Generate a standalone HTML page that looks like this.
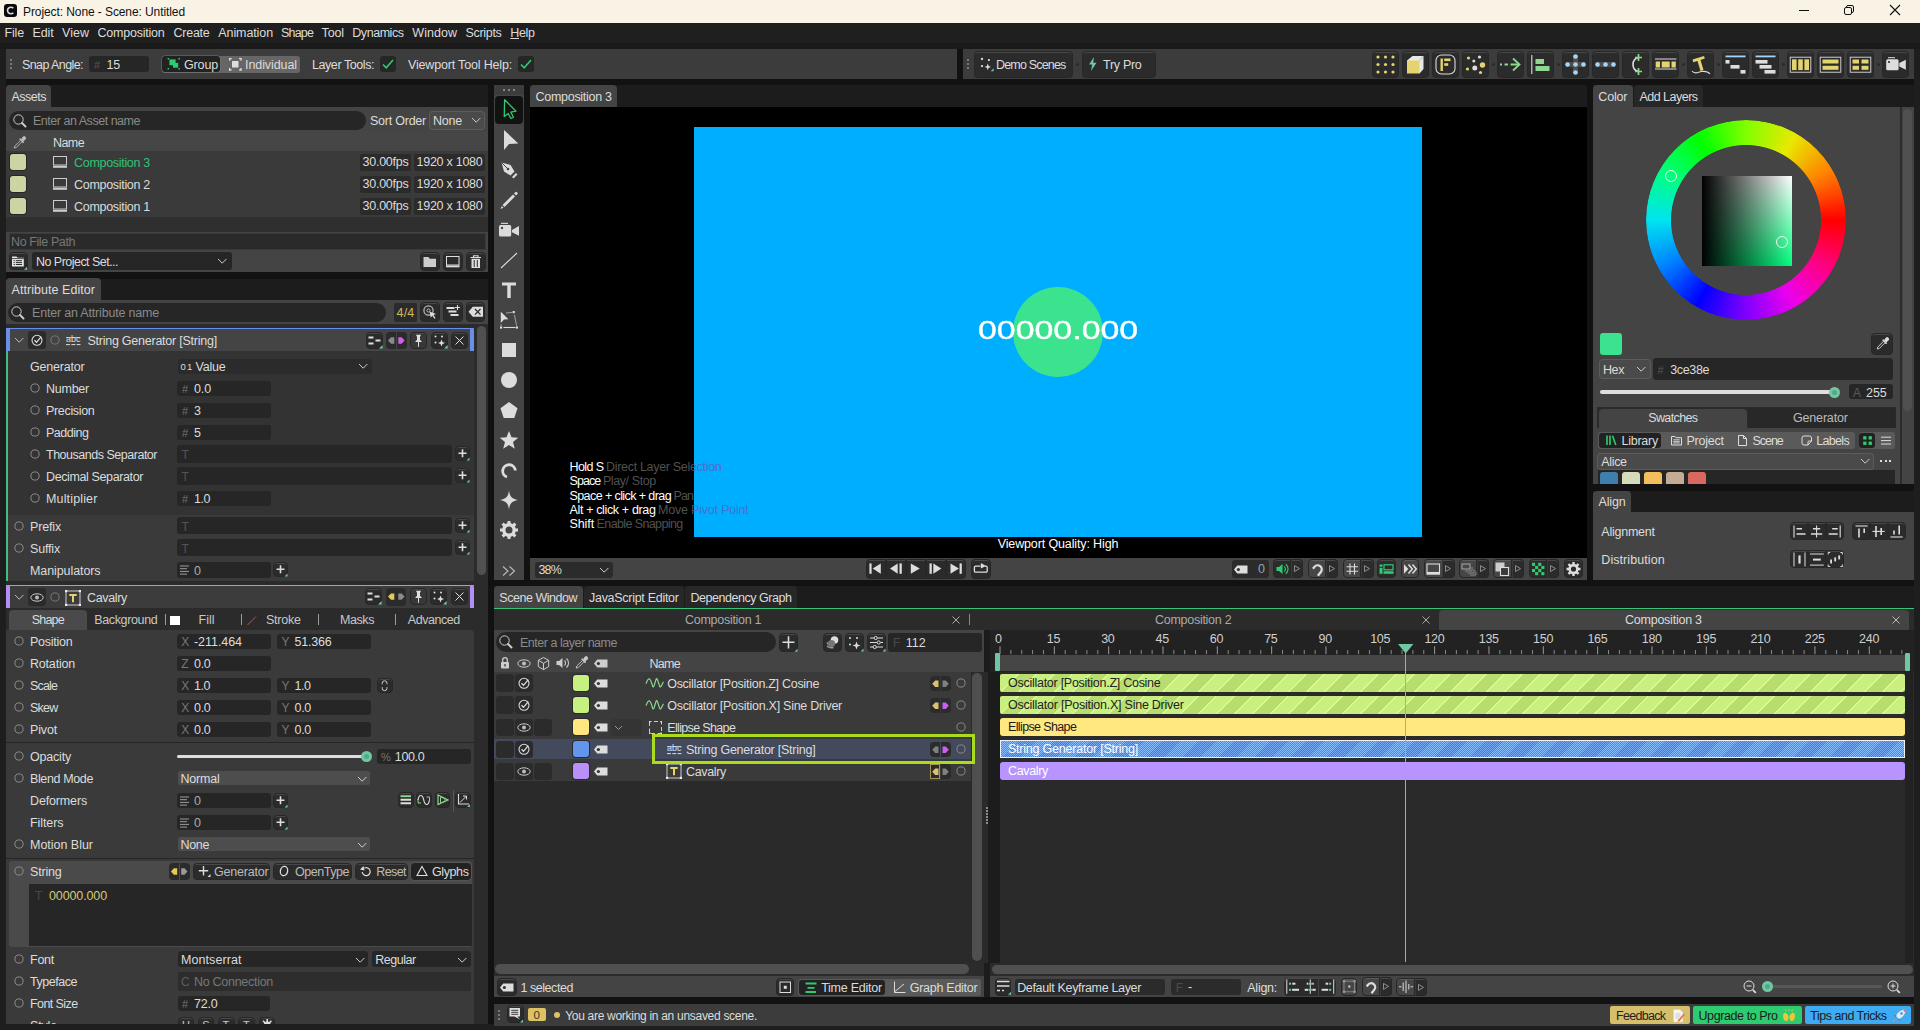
<!DOCTYPE html>
<html><head><meta charset="utf-8"><title>Project: None - Scene: Untitled</title>
<style>
html,body{margin:0;padding:0;}
body{width:1920px;height:1030px;overflow:hidden;background:#1e1e1e;position:relative;font-family:"Liberation Sans",sans-serif;font-size:12px;color:#dcdcdc;}
div,span.t,svg{position:absolute;box-sizing:border-box;}
span.t{white-space:nowrap;display:block;}
svg{overflow:visible;}
.btn{background:#2b2b2b;border-radius:4px;border:1px solid #272727;box-shadow:inset 0 1px 0 #484848;}
.inp{background:#262626;border-radius:3px;}
.tab{background:#444;border-radius:4px 4px 0 0;}
</style></head><body>
<div style="left:6px;top:79px;width:1908px;height:946.7px;background:#121212;"></div>
<div style="left:957px;top:49px;width:6px;height:30px;background:#121212;"></div>
<div style="left:6px;top:85px;width:482px;height:22px;background:#1c1c1c;"></div>
<div style="left:530px;top:85px;width:1057.3px;height:22px;background:#1c1c1c;"></div>
<div style="left:1593px;top:85px;width:321px;height:22px;background:#1c1c1c;"></div>
<div style="left:6px;top:278.5px;width:482px;height:21.5px;background:#1c1c1c;"></div>
<div style="left:1593px;top:490.5px;width:321px;height:21.5px;background:#1c1c1c;"></div>
<div style="left:494px;top:586.2px;width:1420px;height:21.8px;background:#1c1c1c;"></div>
<div style="left:0px;top:0px;width:1920px;height:23px;background:#f9f3e6;"></div>
<svg style="left:4px;top:4px;" width="13" height="13" viewBox="0 0 13 13"><rect x="0" y="0" width="13" height="13" rx="3" fill="#0a0a0a"/><path d="M9.3 4.3 A3.3 3.3 0 1 0 9.3 8.7" fill="none" stroke="#ddd" stroke-width="1.6"/></svg>
<span class="t" style="left:23px;top:3.5px;height:16px;line-height:16px;font-size:12px;color:#111;letter-spacing:-0.088px;">Project: None - Scene: Untitled</span>
<svg style="left:1798px;top:4px;" width="14" height="14" viewBox="0 0 14 14"><path d="M1 6.5 H11" stroke="#111" stroke-width="1"/></svg>
<svg style="left:1843px;top:4px;" width="14" height="14" viewBox="0 0 14 14"><rect x="1.5" y="3.5" width="7" height="7" rx="1.5" fill="none" stroke="#111"/><path d="M3.5 3.5 V3 a1.5 1.5 0 0 1 1.5 -1.5 H9 a1.5 1.5 0 0 1 1.5 1.5 V7 a1.5 1.5 0 0 1 -1.5 1.5" fill="none" stroke="#111"/></svg>
<svg style="left:1889px;top:4px;" width="14" height="14" viewBox="0 0 14 14"><path d="M1 1 L11 11 M11 1 L1 11" stroke="#111" stroke-width="1.1"/></svg>
<div style="left:0px;top:23px;width:1920px;height:20px;background:#1f1f1f;"></div>
<div style="left:0px;top:42.6px;width:1920px;height:6.4px;background:#1a1a1a;"></div>
<span class="t" style="left:4.5px;top:25.0px;height:16px;line-height:16px;font-size:12.5px;color:#dcdcdc;letter-spacing:-0.160px;">File</span>
<span class="t" style="left:32.5px;top:25.0px;height:16px;line-height:16px;font-size:12.5px;color:#dcdcdc;letter-spacing:-0.135px;">Edit</span>
<span class="t" style="left:62px;top:25.0px;height:16px;line-height:16px;font-size:12.5px;color:#dcdcdc;letter-spacing:0.033px;">View</span>
<span class="t" style="left:97.5px;top:25.0px;height:16px;line-height:16px;font-size:12.5px;color:#dcdcdc;letter-spacing:-0.225px;">Composition</span>
<span class="t" style="left:173.5px;top:25.0px;height:16px;line-height:16px;font-size:12.5px;color:#dcdcdc;letter-spacing:-0.253px;">Create</span>
<span class="t" style="left:218.3px;top:25.0px;height:16px;line-height:16px;font-size:12.5px;color:#dcdcdc;letter-spacing:-0.098px;">Animation</span>
<span class="t" style="left:281px;top:25.0px;height:16px;line-height:16px;font-size:12.5px;color:#dcdcdc;letter-spacing:-0.829px;">Shape</span>
<span class="t" style="left:321.5px;top:25.0px;height:16px;line-height:16px;font-size:12.5px;color:#dcdcdc;letter-spacing:-0.107px;">Tool</span>
<span class="t" style="left:352.3px;top:25.0px;height:16px;line-height:16px;font-size:12.5px;color:#dcdcdc;letter-spacing:-0.459px;">Dynamics</span>
<span class="t" style="left:412.3px;top:25.0px;height:16px;line-height:16px;font-size:12.5px;color:#dcdcdc;letter-spacing:0.040px;">Window</span>
<span class="t" style="left:465.5px;top:25.0px;height:16px;line-height:16px;font-size:12.5px;color:#dcdcdc;letter-spacing:-0.314px;">Scripts</span>
<span class="t" style="left:510.3px;top:25.0px;height:16px;line-height:16px;font-size:12.5px;color:#dcdcdc;letter-spacing:-0.35px;"><u>H</u>elp</span>
<div style="left:6px;top:49px;width:951px;height:30px;background:#3c3c3c;"></div>
<div style="left:10px;top:58.9px;width:2px;height:2px;background:#7a7a7a;"></div>
<div style="left:10px;top:62.9px;width:2px;height:2px;background:#7a7a7a;"></div>
<div style="left:10px;top:66.9px;width:2px;height:2px;background:#7a7a7a;"></div>
<span class="t" style="left:22px;top:56.5px;height:16px;line-height:16px;font-size:12.5px;color:#dcdcdc;letter-spacing:-0.583px;">Snap Angle:</span>
<div class="inp" style="left:89px;top:56px;width:60px;height:16px;"></div>
<span class="t" style="left:94px;top:56.5px;height:16px;line-height:16px;font-size:11px;color:#555;">#</span>
<span class="t" style="left:106.5px;top:56.5px;height:16px;line-height:16px;font-size:12.5px;color:#dcdcdc;letter-spacing:-0.201px;">15</span>
<div style="left:161.5px;top:55.5px;width:138px;height:17px;background:#666;border-radius:3px;"></div>
<div style="left:162px;top:56px;width:58px;height:16px;background:#222;border-radius:3px;box-shadow:0 0 0 0.5px #777;"></div>
<svg style="left:167px;top:58px;" width="14" height="13" viewBox="0 0 14 13"><g fill="#2ecc71"><rect x="2.4" y="1.4" width="6.2" height="5.8"/><rect x="6" y="4.9" width="5.2" height="4.8"/><rect x="0.6" y="0" width="1.5" height="1.5"/><rect x="11.4" y="0" width="1.5" height="1.5"/><rect x="0.6" y="10" width="1.5" height="1.5"/><rect x="11.4" y="10" width="1.5" height="1.5"/></g></svg>
<span class="t" style="left:184px;top:56.5px;height:16px;line-height:16px;font-size:12.5px;color:#dcdcdc;letter-spacing:-0.148px;">Group</span>
<svg style="left:228.5px;top:58px;" width="13" height="13" viewBox="0 0 13 13"><rect x="3" y="3" width="6.5" height="6.5" fill="#ddd"/><g fill="#ddd"><rect x="0" y="0" width="2.6" height="1.3"/><rect x="0" y="0" width="1.3" height="2.6"/><rect x="10" y="0" width="2.6" height="1.3"/><rect x="11.3" y="0" width="1.3" height="2.6"/><rect x="0" y="11.3" width="2.6" height="1.3"/><rect x="0" y="10" width="1.3" height="2.6"/><rect x="10" y="11.3" width="2.6" height="1.3"/><rect x="11.3" y="10" width="1.3" height="2.6"/></g></svg>
<span class="t" style="left:245px;top:56.5px;height:16px;line-height:16px;font-size:12.5px;color:#dcdcdc;letter-spacing:-0.081px;">Individual</span>
<span class="t" style="left:312px;top:56.5px;height:16px;line-height:16px;font-size:12.5px;color:#dcdcdc;letter-spacing:-0.430px;">Layer Tools:</span>
<div style="left:380px;top:56px;width:16px;height:16px;background:#262626;border-radius:3px;"></div>
<svg style="left:380px;top:56px;" width="16" height="16" viewBox="0 0 16 16"><path d="M3 8.5 L6.2 11.8 L13 4" fill="none" stroke="#2ecc71" stroke-width="1.6"/></svg>
<span class="t" style="left:408px;top:56.5px;height:16px;line-height:16px;font-size:12.5px;color:#dcdcdc;letter-spacing:-0.170px;">Viewport Tool Help:</span>
<div style="left:518px;top:56px;width:16px;height:16px;background:#262626;border-radius:3px;"></div>
<svg style="left:518px;top:56px;" width="16" height="16" viewBox="0 0 16 16"><path d="M3 8.5 L6.2 11.8 L13 4" fill="none" stroke="#2ecc71" stroke-width="1.6"/></svg>
<div style="left:963px;top:49px;width:951px;height:30px;background:#3c3c3c;"></div>
<div style="left:967px;top:58.9px;width:2px;height:2px;background:#7a7a7a;"></div>
<div style="left:967px;top:62.9px;width:2px;height:2px;background:#7a7a7a;"></div>
<div style="left:967px;top:66.9px;width:2px;height:2px;background:#7a7a7a;"></div>
<div class="btn" style="left:974.3px;top:50.5px;width:99px;height:27px;"></div>
<svg style="left:979px;top:57px;" width="14" height="14" viewBox="0 0 14 14"><g fill="#ddd"><circle cx="3" cy="2" r="1.15"/><circle cx="9.9" cy="3.1" r="1.15"/><circle cx="3" cy="9.1" r="1.15"/><path d="M8.8 6.6 L9.7 9 L12.1 9.9 L9.7 10.8 L8.8 13.2 L7.9 10.8 L5.5 9.9 L7.9 9 Z"/></g><path d="M14.6 11.2 V14.2 H11.6 Z" fill="#6fc7a4"/></svg>
<span class="t" style="left:996px;top:56.5px;height:16px;line-height:16px;font-size:12.5px;color:#dcdcdc;letter-spacing:-0.819px;">Demo Scenes</span>
<div style="left:1076.2px;top:62.8px;width:3px;height:3px;background:#2a2a2a;border-radius:1.5px;"></div>
<div class="btn" style="left:1081.7px;top:50.5px;width:74px;height:27px;"></div>
<svg style="left:1088px;top:57px;" width="10" height="14" viewBox="0 0 10 14"><path d="M6 0 L1 7.5 H4.2 L3 14 L8.5 5.8 H5.2 Z" fill="#6fc7a4"/></svg>
<span class="t" style="left:1103px;top:56.5px;height:16px;line-height:16px;font-size:12.5px;color:#dcdcdc;letter-spacing:-0.287px;">Try Pro</span>
<div class="btn" style="left:1372.3px;top:50.5px;width:27px;height:27px;"></div>
<div class="btn" style="left:1402.3px;top:50.5px;width:27px;height:27px;"></div>
<div class="btn" style="left:1432.3px;top:50.5px;width:27px;height:27px;"></div>
<div class="btn" style="left:1462.3px;top:50.5px;width:27px;height:27px;"></div>
<div class="btn" style="left:1497.3px;top:50.5px;width:27px;height:27px;"></div>
<div class="btn" style="left:1527.3px;top:50.5px;width:27px;height:27px;"></div>
<div class="btn" style="left:1562.3px;top:50.5px;width:27px;height:27px;"></div>
<div class="btn" style="left:1592.3px;top:50.5px;width:27px;height:27px;"></div>
<div class="btn" style="left:1622.3px;top:50.5px;width:27px;height:27px;"></div>
<div class="btn" style="left:1652.3px;top:50.5px;width:27px;height:27px;"></div>
<div class="btn" style="left:1687.3px;top:50.5px;width:27px;height:27px;"></div>
<div class="btn" style="left:1722.3px;top:50.5px;width:27px;height:27px;"></div>
<div class="btn" style="left:1752.3px;top:50.5px;width:27px;height:27px;"></div>
<div class="btn" style="left:1787.3px;top:50.5px;width:27px;height:27px;"></div>
<div class="btn" style="left:1817.3px;top:50.5px;width:27px;height:27px;"></div>
<div class="btn" style="left:1847.3px;top:50.5px;width:27px;height:27px;"></div>
<div class="btn" style="left:1882.3px;top:50.5px;width:27px;height:27px;"></div>
<div style="left:1491.8px;top:62.8px;width:3px;height:3px;background:#2a2a2a;border-radius:1.5px;"></div>
<div style="left:1556.8px;top:62.8px;width:3px;height:3px;background:#2a2a2a;border-radius:1.5px;"></div>
<div style="left:1681.8px;top:62.8px;width:3px;height:3px;background:#2a2a2a;border-radius:1.5px;"></div>
<div style="left:1716.8px;top:62.8px;width:3px;height:3px;background:#2a2a2a;border-radius:1.5px;"></div>
<div style="left:1781.8px;top:62.8px;width:3px;height:3px;background:#2a2a2a;border-radius:1.5px;"></div>
<div style="left:1876.8px;top:62.8px;width:3px;height:3px;background:#2a2a2a;border-radius:1.5px;"></div>
<svg style="left:1372.3px;top:50.5px;" width="27" height="27" viewBox="0 0 27 27"><circle cx="6.0" cy="6.0" r="1.6" fill="#e3d46f"/><circle cx="6.0" cy="13.5" r="1.6" fill="#e3d46f"/><circle cx="6.0" cy="21.0" r="1.6" fill="#e3d46f"/><circle cx="13.5" cy="6.0" r="1.6" fill="#e3d46f"/><circle cx="13.5" cy="13.5" r="1.6" fill="#e3d46f"/><circle cx="13.5" cy="21.0" r="1.6" fill="#e3d46f"/><circle cx="21.0" cy="6.0" r="1.6" fill="#e3d46f"/><circle cx="21.0" cy="13.5" r="1.6" fill="#e3d46f"/><circle cx="21.0" cy="21.0" r="1.6" fill="#e3d46f"/></svg>
<svg style="left:1402.3px;top:50.5px;" width="27" height="27" viewBox="0 0 27 27"><path d="M5 9.5 L10.5 5 H21.5 V18 L17.5 22.5 Z" fill="#e8e8e8"/><rect x="5" y="9.5" width="12.5" height="13" fill="#e3d46f"/><path d="M17.5 9.5 L21.5 5" stroke="#999" stroke-width="0.6"/></svg>
<svg style="left:1432.3px;top:50.5px;" width="27" height="27" viewBox="0 0 27 27"><rect x="4" y="4" width="19" height="19" rx="5.5" fill="none" stroke="#ddd" stroke-width="1.1"/><rect x="8.5" y="7.5" width="2.4" height="12.5" fill="#e3d46f"/><rect x="12.2" y="7.5" width="6.3" height="2.6" fill="#e3d46f"/><rect x="12.2" y="12.2" width="4" height="2.6" fill="#e3d46f"/></svg>
<svg style="left:1462.3px;top:50.5px;" width="27" height="27" viewBox="0 0 27 27"><circle cx="6.5" cy="7" r="1.6" fill="#e3d46f"/><circle cx="17.5" cy="6" r="1.6" fill="#ddd"/><circle cx="11.8" cy="10" r="1.5" fill="#ddd"/><circle cx="20.5" cy="14" r="2.7" fill="#e3d46f"/><circle cx="12.8" cy="17" r="2.5" fill="#ddd"/><circle cx="5.5" cy="18" r="1.6" fill="#e3d46f"/><circle cx="18.5" cy="21.5" r="1.6" fill="#e3d46f"/></svg>
<svg style="left:1497.3px;top:50.5px;" width="27" height="27" viewBox="0 0 27 27"><path d="M3 13.5 H5 M7.5 13.5 H11 M13.5 13.5 H22" stroke="#8fd68f" stroke-width="1.8"/><path d="M16 7.5 L22.5 13.5 L16 19.5" fill="none" stroke="#8fd68f" stroke-width="1.8"/></svg>
<svg style="left:1527.3px;top:50.5px;" width="27" height="27" viewBox="0 0 27 27"><path d="M4.8 4 V23" stroke="#ddd" stroke-width="1.1"/><rect x="8.5" y="8" width="8.5" height="5" fill="#8fd68f"/><rect x="8.5" y="15" width="14" height="5" fill="#8fd68f"/></svg>
<svg style="left:1562.3px;top:50.5px;" width="27" height="27" viewBox="0 0 27 27"><path d="M13.5 4 V23 M4 13.5 H23" stroke="#4e4e4e" stroke-width="5.2"/><circle cx="13.5" cy="5.5" r="2.3" fill="#a5d4f7"/><circle cx="5.5" cy="13.5" r="2.3" fill="#a5d4f7"/><circle cx="13.5" cy="13.5" r="2.3" fill="#a5d4f7"/><circle cx="21.5" cy="13.5" r="2.3" fill="#a5d4f7"/><circle cx="13.5" cy="21.5" r="2.3" fill="#a5d4f7"/></svg>
<svg style="left:1592.3px;top:50.5px;" width="27" height="27" viewBox="0 0 27 27"><path d="M4 13.5 H23" stroke="#4e4e4e" stroke-width="5.2"/><circle cx="5.5" cy="13.5" r="2.3" fill="#a5d4f7"/><circle cx="13.5" cy="13.5" r="2.3" fill="#a5d4f7"/><circle cx="21.5" cy="13.5" r="2.3" fill="#a5d4f7"/></svg>
<svg style="left:1622.3px;top:50.5px;" width="27" height="27" viewBox="0 0 27 27"><path d="M16.5 6.5 A7.2 7.2 0 0 0 16.5 20.5" fill="none" stroke="#ddd" stroke-width="1.6"/><path d="M16.5 3 V10 M13 6.5 H20 M16.5 17 V24 M13 20.5 H20" stroke="#8fd68f" stroke-width="1.7"/></svg>
<svg style="left:1652.3px;top:50.5px;" width="27" height="27" viewBox="0 0 27 27"><path d="M3 8 H24.5 M3 18 H24.5" stroke="#ddd" stroke-width="1"/><rect x="3.7" y="10.5" width="4.3" height="6" fill="#e3d46f"/><rect x="9.7" y="10.5" width="8" height="6" fill="#e3d46f"/><rect x="19.5" y="10.5" width="4.3" height="6" fill="#e3d46f"/></svg>
<svg style="left:1687.3px;top:50.5px;" width="27" height="27" viewBox="0 0 27 27"><path d="M5.5 8.5 L17 5 L17.8 7.6 L13.5 9 L16.5 19 L13.5 20 L10.5 10 L6.3 11.2 Z" fill="#e3d46f"/><path d="M5 20 C8 24 11 21 14.5 20.5 C18 20 20.5 20 23 23" fill="none" stroke="#ddd" stroke-width="1.1"/></svg>
<svg style="left:1722.3px;top:50.5px;" width="27" height="27" viewBox="0 0 27 27"><rect x="3.5" y="4.5" width="20" height="1.8" fill="#a5d4f7"/><rect x="3.5" y="9" width="4" height="3.6" fill="#ddd"/><rect x="8.5" y="14" width="9" height="3.6" fill="#ddd"/><rect x="18.5" y="19" width="5" height="3.6" fill="#ddd"/></svg>
<svg style="left:1752.3px;top:50.5px;" width="27" height="27" viewBox="0 0 27 27"><rect x="3.5" y="4.5" width="20" height="1.8" fill="#a5d4f7"/><rect x="3.5" y="9" width="12" height="3.6" fill="#ddd"/><rect x="7.5" y="14" width="12" height="3.6" fill="#ddd"/><rect x="12.5" y="19" width="11" height="3.6" fill="#ddd"/></svg>
<svg style="left:1787.3px;top:50.5px;" width="27" height="27" viewBox="0 0 27 27"><rect x="3.2" y="6.2" width="20.6" height="15" fill="none" stroke="#ddd" stroke-width="0.9"/><rect x="5" y="8.3" width="4.6" height="10.8" fill="#e3d46f"/><rect x="11.2" y="8.3" width="4.6" height="10.8" fill="#e3d46f"/><rect x="17.4" y="8.3" width="4.6" height="10.8" fill="#e3d46f"/></svg>
<svg style="left:1817.3px;top:50.5px;" width="27" height="27" viewBox="0 0 27 27"><rect x="3.2" y="6.2" width="20.6" height="15" fill="none" stroke="#ddd" stroke-width="0.9"/><rect x="5.5" y="8.5" width="16" height="4" fill="#e3d46f"/><rect x="5.5" y="14.8" width="16" height="4" fill="#e3d46f"/></svg>
<svg style="left:1847.3px;top:50.5px;" width="27" height="27" viewBox="0 0 27 27"><rect x="3.2" y="6.2" width="20.6" height="15" fill="none" stroke="#ddd" stroke-width="0.9"/><rect x="5.5" y="8.5" width="6.5" height="4" fill="#e3d46f"/><rect x="5.5" y="14.8" width="6.5" height="4" fill="#e3d46f"/><rect x="14.5" y="8.5" width="7" height="4" fill="#e3d46f"/><rect x="14.5" y="14.8" width="7" height="4" fill="#e3d46f"/></svg>
<svg style="left:1882.3px;top:50.5px;" width="27" height="27" viewBox="0 0 27 27"><rect x="4.2" y="8.2" width="12.4" height="11" rx="1.5" fill="#ddd"/><path d="M17.3 12 L23.8 8.8 V18.8 L17.3 15.6 Z" fill="#ddd"/><rect x="6" y="6.2" width="7" height="1" fill="#ddd"/><circle cx="7" cy="11" r="1.1" fill="#2b2b2b"/></svg>
<div class="tab" style="left:6px;top:85px;width:45px;height:22px;"></div>
<span class="t" style="left:11.5px;top:88.5px;height:16px;line-height:16px;font-size:12.5px;color:#dcdcdc;letter-spacing:-0.502px;">Assets</span>
<div style="left:6px;top:107px;width:482px;height:165px;background:#444;"></div>
<div style="left:9px;top:110.5px;width:357px;height:19px;background:#262626;border-radius:10px;"></div>
<svg style="left:12.5px;top:113.5px;" width="14" height="14" viewBox="0 0 14 14"><circle cx="5.5" cy="5.5" r="4.7" fill="none" stroke="#ccc" stroke-width="1"/><path d="M9 9 L12.5 12.5" stroke="#ccc" stroke-width="2" stroke-linecap="round"/></svg>
<span class="t" style="left:33px;top:112.5px;height:16px;line-height:16px;font-size:12.5px;color:#8a8a8a;letter-spacing:-0.475px;">Enter an Asset name</span>
<span class="t" style="left:370px;top:112.5px;height:16px;line-height:16px;font-size:12.5px;color:#dcdcdc;letter-spacing:-0.235px;">Sort Order</span>
<div style="left:430px;top:111.5px;width:54px;height:17px;background:#4a4a4a;border-radius:3px;box-shadow:0 0 0 1px #5c5c5c;"></div>
<span class="t" style="left:433px;top:112.5px;height:16px;line-height:16px;font-size:12.5px;color:#dcdcdc;letter-spacing:-0.220px;">None</span>
<svg style="left:470.8px;top:117.4px;" width="10.4" height="6.2" viewBox="0 0 10.4 6.2"><path d="M1 1 L5.2 5.2 L9.4 1" fill="none" stroke="#ccc" stroke-width="1.0"/></svg>
<div style="left:6px;top:131px;width:482px;height:20px;background:#464646;"></div>
<svg style="left:12.5px;top:136px;" width="13.299999999999999" height="13.299999999999999" viewBox="0 0 14 14"><g transform="rotate(45 7 7)"><rect x="5.1" y="-1.6" width="3.8" height="5" rx="1.5" fill="#bbb"/><rect x="4" y="3.2" width="6" height="1.7" rx="0.5" fill="#bbb"/><path d="M5.9 5 V13.2 L7 15 L8.1 13.2 V5" fill="none" stroke="#bbb" stroke-width="0.9"/></g></svg>
<span class="t" style="left:53px;top:135.0px;height:16px;line-height:16px;font-size:12.5px;color:#dcdcdc;letter-spacing:-0.585px;">Name</span>
<div style="left:6px;top:151px;width:482px;height:66px;background:#3a3a3a;"></div>
<div style="left:6px;top:217px;width:482px;height:15px;background:#2f2f2f;"></div>
<div style="left:10px;top:153.9px;width:16px;height:16px;background:#cdd4a3;border-radius:3px;box-shadow:0 0 0 1px #262626;"></div>
<svg style="left:53px;top:156.0px;" width="14" height="12" viewBox="0 0 14 12"><rect x="0.5" y="0.5" width="13" height="8.5" fill="none" stroke="#ccc" stroke-width="1"/><rect x="0" y="9.8" width="14" height="2" fill="#ccc"/></svg>
<span class="t" style="left:74px;top:154.7px;height:16px;line-height:16px;font-size:12.5px;color:#2fc274;letter-spacing:-0.300px;">Composition 3</span>
<div style="left:360px;top:153.5px;width:50.5px;height:17px;background:#2b2b2b;border-radius:2px;"></div>
<span class="t" style="left:362.5px;top:154.0px;height:16px;line-height:16px;font-size:12.5px;color:#dcdcdc;letter-spacing:-0.244px;">30.00fps</span>
<div style="left:414px;top:153.5px;width:70.5px;height:17px;background:#2b2b2b;border-radius:2px;"></div>
<span class="t" style="left:416.5px;top:154.0px;height:16px;line-height:16px;font-size:12.5px;color:#dcdcdc;letter-spacing:-0.255px;">1920 x 1080</span>
<div style="left:10px;top:175.9px;width:16px;height:16px;background:#cdd4a3;border-radius:3px;box-shadow:0 0 0 1px #262626;"></div>
<svg style="left:53px;top:178.0px;" width="14" height="12" viewBox="0 0 14 12"><rect x="0.5" y="0.5" width="13" height="8.5" fill="none" stroke="#ccc" stroke-width="1"/><rect x="0" y="9.8" width="14" height="2" fill="#ccc"/></svg>
<span class="t" style="left:74px;top:176.7px;height:16px;line-height:16px;font-size:12.5px;color:#dcdcdc;letter-spacing:-0.300px;">Composition 2</span>
<div style="left:360px;top:175.5px;width:50.5px;height:17px;background:#2b2b2b;border-radius:2px;"></div>
<span class="t" style="left:362.5px;top:176.0px;height:16px;line-height:16px;font-size:12.5px;color:#dcdcdc;letter-spacing:-0.244px;">30.00fps</span>
<div style="left:414px;top:175.5px;width:70.5px;height:17px;background:#2b2b2b;border-radius:2px;"></div>
<span class="t" style="left:416.5px;top:176.0px;height:16px;line-height:16px;font-size:12.5px;color:#dcdcdc;letter-spacing:-0.255px;">1920 x 1080</span>
<div style="left:10px;top:197.9px;width:16px;height:16px;background:#cdd4a3;border-radius:3px;box-shadow:0 0 0 1px #262626;"></div>
<svg style="left:53px;top:200.0px;" width="14" height="12" viewBox="0 0 14 12"><rect x="0.5" y="0.5" width="13" height="8.5" fill="none" stroke="#ccc" stroke-width="1"/><rect x="0" y="9.8" width="14" height="2" fill="#ccc"/></svg>
<span class="t" style="left:74px;top:198.7px;height:16px;line-height:16px;font-size:12.5px;color:#dcdcdc;letter-spacing:-0.300px;">Composition 1</span>
<div style="left:360px;top:197.5px;width:50.5px;height:17px;background:#2b2b2b;border-radius:2px;"></div>
<span class="t" style="left:362.5px;top:198.0px;height:16px;line-height:16px;font-size:12.5px;color:#dcdcdc;letter-spacing:-0.244px;">30.00fps</span>
<div style="left:414px;top:197.5px;width:70.5px;height:17px;background:#2b2b2b;border-radius:2px;"></div>
<span class="t" style="left:416.5px;top:198.0px;height:16px;line-height:16px;font-size:12.5px;color:#dcdcdc;letter-spacing:-0.255px;">1920 x 1080</span>
<div style="left:9px;top:233px;width:477px;height:16.5px;background:#2a2a2a;box-shadow:0 0 0 1px #3a3a3a inset;"></div>
<span class="t" style="left:11px;top:233.5px;height:16px;line-height:16px;font-size:12.5px;color:#777;letter-spacing:-0.398px;">No File Path</span>
<div class="btn" style="left:9.2px;top:251.5px;width:18.8px;height:18.8px;"></div>
<svg style="left:9.2px;top:251.5px;" width="18.8" height="18.8" viewBox="0 0 18.8 18.8"><path d="M3 4.5 H7.5 L8.6 5.8 H14.8 V14.6 H3 Z" fill="#e4e4e4"/><path d="M3 6.6 H14.8" stroke="#2b2b2b" stroke-width="0.8"/><path d="M6.8 8.7 H13 M6.8 10.6 H13 M6.8 12.5 H13" stroke="#2b2b2b" stroke-width="1"/><path d="M4.6 8.7 H5.8 M4.6 10.6 H5.8 M4.6 12.5 H5.8" stroke="#2b2b2b" stroke-width="1"/><path d="M18 14.8 V17.8 H15 Z" fill="#6fc7a4"/></svg>
<div style="left:32px;top:252.2px;width:199.8px;height:17.5px;background:#262626;border-radius:3px;"></div>
<span class="t" style="left:36px;top:253.5px;height:16px;line-height:16px;font-size:12.5px;color:#dcdcdc;letter-spacing:-0.530px;">No Project Set...</span>
<svg style="left:217.3px;top:258.4px;" width="10.4" height="6.2" viewBox="0 0 10.4 6.2"><path d="M1 1 L5.2 5.2 L9.4 1" fill="none" stroke="#ccc" stroke-width="1.0"/></svg>
<div class="btn" style="left:420.3px;top:251.7px;width:19.5px;height:19.5px;"></div>
<div class="btn" style="left:443px;top:251.7px;width:19.5px;height:19.5px;"></div>
<div class="btn" style="left:466px;top:251.7px;width:19.5px;height:19.5px;"></div>
<svg style="left:420.3px;top:251.7px;" width="19.5" height="19.5" viewBox="0 0 19.5 19.5"><path d="M3.5 5 H8.5 L9.8 6.8 H16 V15 H3.5 Z" fill="#ccc"/></svg>
<svg style="left:443px;top:251.7px;" width="19.5" height="19.5" viewBox="0 0 19.5 19.5"><rect x="3.5" y="4.5" width="12.5" height="8.5" fill="none" stroke="#ddd" stroke-width="1"/><rect x="3" y="13.5" width="13.5" height="1.8" fill="#ddd"/></svg>
<svg style="left:466px;top:251.7px;" width="19.5" height="19.5" viewBox="0 0 19.5 19.5"><path d="M4.5 5.5 H15 M7.5 5 V3.8 H12 V5" stroke="#ddd" stroke-width="1.1" fill="none"/><path d="M5.5 6.8 H14 V16 H5.5 Z" fill="#ddd"/><path d="M8.2 8 V15 M11.3 8 V15" stroke="#2b2b2b" stroke-width="1"/></svg>
<div class="tab" style="left:6px;top:278.2px;width:95px;height:21.8px;"></div>
<span class="t" style="left:11.5px;top:282.0px;height:16px;line-height:16px;font-size:12.5px;color:#dcdcdc;letter-spacing:0.052px;">Attribute Editor</span>
<div style="left:6px;top:300px;width:482px;height:24px;background:#444;"></div>
<div style="left:6px;top:324px;width:482px;height:700px;background:#2b2b2b;"></div>
<div style="left:8.2px;top:302.5px;width:378px;height:19.3px;background:#262626;border-radius:10px;"></div>
<svg style="left:11.3px;top:305.6px;" width="14" height="14" viewBox="0 0 14 14"><circle cx="5.5" cy="5.5" r="4.7" fill="none" stroke="#ccc" stroke-width="1"/><path d="M9 9 L12.5 12.5" stroke="#ccc" stroke-width="2" stroke-linecap="round"/></svg>
<span class="t" style="left:32px;top:305.0px;height:16px;line-height:16px;font-size:12.5px;color:#8a8a8a;letter-spacing:-0.188px;">Enter an Attribute name</span>
<div style="left:394px;top:302.5px;width:23px;height:19.5px;background:#2b2b2b;border-radius:2px;"></div>
<span class="t" style="left:396.5px;top:304.5px;height:16px;line-height:16px;font-size:12.5px;color:#d3b85e;letter-spacing:0.208px;">4/4</span>
<div class="btn" style="left:420.3px;top:302.3px;width:19.5px;height:19.5px;"></div>
<div class="btn" style="left:443.3px;top:302.3px;width:19.5px;height:19.5px;"></div>
<div class="btn" style="left:465.5px;top:302.3px;width:19.5px;height:19.5px;"></div>
<svg style="left:420.3px;top:302.3px;" width="19.5" height="19.5" viewBox="0 0 19.5 19.5"><circle cx="8.5" cy="8.5" r="4.6" fill="none" stroke="#bbb" stroke-width="1.2"/><circle cx="8.5" cy="8.5" r="1.6" fill="none" stroke="#bbb" stroke-width="1"/><path d="M9.5 9.5 L16 12 L13.5 13 L15.5 16 L14.3 16.8 L12.5 13.8 L10.8 15.5 Z" fill="#ddd"/></svg>
<svg style="left:443.3px;top:302.3px;" width="19.5" height="19.5" viewBox="0 0 19.5 19.5"><path d="M3.5 6 H11.5 M5.5 9.5 H13.5 M7.5 13 H15.5" stroke="#ddd" stroke-width="1.9"/><path d="M14.5 3 V8 M12 5.5 H17" stroke="#ddd" stroke-width="1.1"/></svg>
<svg style="left:465.5px;top:302.3px;" width="19.5" height="19.5" viewBox="0 0 19.5 19.5"><path d="M2.5 9.8 L6.8 4.8 H17 V14.8 H6.8 Z" fill="#ddd"/><path d="M9 7 L14.5 12.6 M14.5 7 L9 12.6" stroke="#2b2b2b" stroke-width="1.3"/></svg>
<div style="left:476.5px;top:325.5px;width:9.5px;height:249px;background:#505050;border-radius:5px;"></div>
<div style="left:6.3px;top:328px;width:467.7px;height:23px;background:#444;"></div>
<div style="left:6.3px;top:328px;width:467.7px;height:1.3px;background:#6a8fe8;"></div>
<div style="left:6.3px;top:328px;width:3.6px;height:23px;background:#6a8fe8;border-radius:2px 0 0 0;"></div>
<div style="left:470px;top:328px;width:4px;height:23px;background:#6a8fe8;border-radius:0 3px 0 0;"></div>
<div style="left:6.3px;top:351px;width:467.7px;height:229.5px;background:#3a3a3a;"></div>
<div style="left:6px;top:351px;width:2px;height:229.5px;background:#3fbf7a;"></div>
<div style="left:7.5px;top:351px;width:466.5px;height:164px;background:#333;"></div>
<svg style="left:13.8px;top:336.9px;" width="10.4" height="6.2" viewBox="0 0 10.4 6.2"><path d="M1 1 L5.2 5.2 L9.4 1" fill="none" stroke="#bbb" stroke-width="1.0"/></svg>
<div style="left:28px;top:331px;width:18px;height:18px;background:#2b2b2b;border-radius:3px;"></div>
<svg style="left:30px;top:333px;" width="14" height="14" viewBox="0 0 14 14"><circle cx="7" cy="7.3" r="5" fill="none" stroke="#ddd" stroke-width="1.1"/><path d="M4.5 7.3 L6.5 9.3 L11.3 3.6" fill="none" stroke="#ddd" stroke-width="1.3"/></svg>
<svg style="left:49px;top:334px;" width="12" height="12" viewBox="0 0 12 12"><circle cx="6" cy="6" r="4.1" fill="none" stroke="#777" stroke-width="1"/></svg>
<svg style="left:66px;top:334.5px;" width="15" height="11" viewBox="0 0 15 11"><text x="0" y="7" font-size="8.5" fill="#ddd" font-family="Liberation Sans, sans-serif" textLength="14.5" lengthAdjust="spacingAndGlyphs">abc</text><path d="M0 9.6 H4 M5.3 9.6 H9.3 M10.6 9.6 H14.5" stroke="#ddd" stroke-width="1"/><path d="M0 2.6 H14.5" stroke="#ddd" stroke-width="0.8"/></svg>
<span class="t" style="left:87.4px;top:332.5px;height:16px;line-height:16px;font-size:12.5px;color:#dcdcdc;letter-spacing:-0.239px;">String Generator [String]</span>
<div class="btn" style="left:365.8px;top:331.5px;width:17px;height:17px;"></div>
<svg style="left:365.8px;top:331.5px;" width="17" height="17" viewBox="0 0 17 17"><rect x="2.5" y="4.5" width="5" height="2" fill="#ddd"/><rect x="2.5" y="10.5" width="5" height="2" fill="#ddd"/><rect x="9.5" y="7.5" width="5" height="2" fill="#ddd"/><path d="M16.6 13 V16.6 H13 Z" fill="#6fc7a4"/></svg>
<div style="left:386.2px;top:331.5px;width:10.0px;height:17px;background:#2b2b2b;border-radius:4px 0 0 4px;"></div>
<div style="left:396.8px;top:331.5px;width:10.0px;height:17px;background:#2b2b2b;border-radius:0 4px 4px 0;"></div>
<svg style="left:386.2px;top:331.5px;" width="20.6" height="17" viewBox="0 0 20.6 17"><path d="M8.3 5.3 H5.000000000000001 L2.0 8.5 L5.000000000000001 11.7 H8.3 Z" fill="#8a8a8a"/><path d="M12.3 5.3 H15.600000000000001 L18.6 8.5 L15.600000000000001 11.7 H12.3 Z" fill="#d55ef0"/></svg>
<div class="btn" style="left:410.4px;top:331.5px;width:17px;height:17px;background:#383838;"></div>
<svg style="left:410.4px;top:331.5px;" width="17" height="17" viewBox="0 0 17 17"><path d="M6.3 2.8 H10.7 V4 L10 4.5 V7.8 L12 10 H5 L7 7.8 V4.5 L6.3 4 Z" fill="#ddd"/><path d="M8.5 10 V14.8" stroke="#ddd" stroke-width="1"/></svg>
<div class="btn" style="left:430.6px;top:331.5px;width:17px;height:17px;"></div>
<svg style="left:430.6px;top:331.5px;" width="17" height="17" viewBox="0 0 17 17"><g fill="#ddd"><circle cx="4.5" cy="4.5" r="1"/><circle cx="11" cy="4.5" r="1"/><circle cx="4.5" cy="10.5" r="1"/><path d="M10.5 7.5 L11.5 10 L14 11 L11.5 12 L10.5 14.5 L9.5 12 L7 11 L9.5 10 Z"/></g><path d="M16.6 13 V16.6 H13 Z" fill="#6fc7a4"/></svg>
<div class="btn" style="left:450.5px;top:331.5px;width:17px;height:17px;"></div>
<svg style="left:450.5px;top:331.5px;" width="17" height="17" viewBox="0 0 17 17"><path d="M4.5 4.5 L12.5 12.5 M12.5 4.5 L4.5 12.5" stroke="#ddd" stroke-width="1"/></svg>
<span class="t" style="left:30px;top:358.5px;height:16px;line-height:16px;font-size:12.5px;color:#dcdcdc;letter-spacing:-0.197px;">Generator</span>
<div style="left:177.5px;top:358.5px;width:194.5px;height:15.5px;background:#2b2b2b;border-radius:3px;"></div>
<span class="t" style="left:180.5px;top:358.5px;height:16px;line-height:16px;font-size:9.5px;color:#dcdcdc;letter-spacing:1.3px;">01</span>
<span class="t" style="left:195.5px;top:358.5px;height:16px;line-height:16px;font-size:12.5px;color:#dcdcdc;letter-spacing:-0.208px;">Value</span>
<svg style="left:358.3px;top:363.4px;" width="10.4" height="6.2" viewBox="0 0 10.4 6.2"><path d="M1 1 L5.2 5.2 L9.4 1" fill="none" stroke="#ccc" stroke-width="1.0"/></svg>
<svg style="left:29px;top:382.3px;" width="12" height="12" viewBox="0 0 12 12"><circle cx="6" cy="6" r="4.1" fill="none" stroke="#8c8c8c" stroke-width="1"/></svg>
<span class="t" style="left:46px;top:380.8px;height:16px;line-height:16px;font-size:12.5px;color:#dcdcdc;letter-spacing:-0.243px;">Number</span>
<div class="inp" style="left:177px;top:380.6px;width:94px;height:15.3px;"></div>
<span class="t" style="left:182px;top:380.90000000000003px;height:16px;line-height:16px;font-size:11px;color:#727272;">#</span>
<span class="t" style="left:194px;top:380.8px;height:16px;line-height:16px;font-size:12.5px;color:#dcdcdc;letter-spacing:-0.125px;">0.0</span>
<svg style="left:29px;top:404.3px;" width="12" height="12" viewBox="0 0 12 12"><circle cx="6" cy="6" r="4.1" fill="none" stroke="#8c8c8c" stroke-width="1"/></svg>
<span class="t" style="left:46px;top:402.8px;height:16px;line-height:16px;font-size:12.5px;color:#dcdcdc;letter-spacing:-0.323px;">Precision</span>
<div class="inp" style="left:177px;top:402.6px;width:94px;height:15.3px;"></div>
<span class="t" style="left:182px;top:402.90000000000003px;height:16px;line-height:16px;font-size:11px;color:#727272;">#</span>
<span class="t" style="left:194px;top:402.8px;height:16px;line-height:16px;font-size:12.5px;color:#dcdcdc;letter-spacing:0.049px;">3</span>
<svg style="left:29px;top:426.3px;" width="12" height="12" viewBox="0 0 12 12"><circle cx="6" cy="6" r="4.1" fill="none" stroke="#8c8c8c" stroke-width="1"/></svg>
<span class="t" style="left:46px;top:424.8px;height:16px;line-height:16px;font-size:12.5px;color:#dcdcdc;letter-spacing:-0.482px;">Padding</span>
<div class="inp" style="left:177px;top:424.6px;width:94px;height:15.3px;"></div>
<span class="t" style="left:182px;top:424.90000000000003px;height:16px;line-height:16px;font-size:11px;color:#727272;">#</span>
<span class="t" style="left:194px;top:424.8px;height:16px;line-height:16px;font-size:12.5px;color:#dcdcdc;letter-spacing:0.049px;">5</span>
<svg style="left:29px;top:448.3px;" width="12" height="12" viewBox="0 0 12 12"><circle cx="6" cy="6" r="4.1" fill="none" stroke="#8c8c8c" stroke-width="1"/></svg>
<span class="t" style="left:46px;top:446.8px;height:16px;line-height:16px;font-size:12.5px;color:#dcdcdc;letter-spacing:-0.484px;">Thousands Separator</span>
<div class="inp" style="left:177px;top:445.3px;width:275px;height:17.4px;"></div>
<span class="t" style="left:181.5px;top:446.90000000000003px;height:16px;line-height:16px;font-size:12px;color:#555;">T</span>
<div class="btn" style="left:455.3px;top:446.0px;width:15px;height:15px;"></div>
<svg style="left:455.3px;top:446.0px;" width="15" height="15" viewBox="0 0 15 15"><path d="M7.5 3.2 V11.2 M3.5 7.2 H11.5" stroke="#ddd" stroke-width="1.6"/><path d="M14.5 11.5 V14.5 H11.5 Z" fill="#6fc7a4"/></svg>
<svg style="left:29px;top:470.3px;" width="12" height="12" viewBox="0 0 12 12"><circle cx="6" cy="6" r="4.1" fill="none" stroke="#8c8c8c" stroke-width="1"/></svg>
<span class="t" style="left:46px;top:468.8px;height:16px;line-height:16px;font-size:12.5px;color:#dcdcdc;letter-spacing:-0.383px;">Decimal Separator</span>
<div class="inp" style="left:177px;top:467.3px;width:275px;height:17.4px;"></div>
<span class="t" style="left:181.5px;top:468.90000000000003px;height:16px;line-height:16px;font-size:12px;color:#555;">T</span>
<div class="btn" style="left:455.3px;top:468.0px;width:15px;height:15px;"></div>
<svg style="left:455.3px;top:468.0px;" width="15" height="15" viewBox="0 0 15 15"><path d="M7.5 3.2 V11.2 M3.5 7.2 H11.5" stroke="#ddd" stroke-width="1.6"/><path d="M14.5 11.5 V14.5 H11.5 Z" fill="#6fc7a4"/></svg>
<svg style="left:29px;top:492.3px;" width="12" height="12" viewBox="0 0 12 12"><circle cx="6" cy="6" r="4.1" fill="none" stroke="#8c8c8c" stroke-width="1"/></svg>
<span class="t" style="left:46px;top:490.8px;height:16px;line-height:16px;font-size:12.5px;color:#dcdcdc;letter-spacing:0.149px;">Multiplier</span>
<div class="inp" style="left:177px;top:490.6px;width:94px;height:15.3px;"></div>
<span class="t" style="left:182px;top:490.90000000000003px;height:16px;line-height:16px;font-size:11px;color:#727272;">#</span>
<span class="t" style="left:194px;top:490.8px;height:16px;line-height:16px;font-size:12.5px;color:#dcdcdc;letter-spacing:-0.458px;">1.0</span>
<svg style="left:12.899999999999999px;top:520.0px;" width="12" height="12" viewBox="0 0 12 12"><circle cx="6" cy="6" r="4.1" fill="none" stroke="#8c8c8c" stroke-width="1"/></svg>
<span class="t" style="left:30px;top:518.5px;height:16px;line-height:16px;font-size:12.5px;color:#dcdcdc;letter-spacing:-0.159px;">Prefix</span>
<div class="inp" style="left:177px;top:517.0px;width:275px;height:17.4px;"></div>
<span class="t" style="left:181.5px;top:518.5999999999999px;height:16px;line-height:16px;font-size:12px;color:#555;">T</span>
<div class="btn" style="left:455.3px;top:517.6999999999999px;width:15px;height:15px;"></div>
<svg style="left:455.3px;top:517.6999999999999px;" width="15" height="15" viewBox="0 0 15 15"><path d="M7.5 3.2 V11.2 M3.5 7.2 H11.5" stroke="#ddd" stroke-width="1.6"/><path d="M14.5 11.5 V14.5 H11.5 Z" fill="#6fc7a4"/></svg>
<svg style="left:12.899999999999999px;top:542.0px;" width="12" height="12" viewBox="0 0 12 12"><circle cx="6" cy="6" r="4.1" fill="none" stroke="#8c8c8c" stroke-width="1"/></svg>
<span class="t" style="left:30px;top:540.5px;height:16px;line-height:16px;font-size:12.5px;color:#dcdcdc;letter-spacing:-0.173px;">Suffix</span>
<div class="inp" style="left:177px;top:539.0px;width:275px;height:17.4px;"></div>
<span class="t" style="left:181.5px;top:540.5999999999999px;height:16px;line-height:16px;font-size:12px;color:#555;">T</span>
<div class="btn" style="left:455.3px;top:539.6999999999999px;width:15px;height:15px;"></div>
<svg style="left:455.3px;top:539.6999999999999px;" width="15" height="15" viewBox="0 0 15 15"><path d="M7.5 3.2 V11.2 M3.5 7.2 H11.5" stroke="#ddd" stroke-width="1.6"/><path d="M14.5 11.5 V14.5 H11.5 Z" fill="#6fc7a4"/></svg>
<span class="t" style="left:30px;top:562.5px;height:16px;line-height:16px;font-size:12.5px;color:#dcdcdc;letter-spacing:-0.088px;">Manipulators</span>
<div class="inp" style="left:177px;top:562.3px;width:94px;height:15.3px;"></div>
<svg style="left:180px;top:565.3px;" width="10" height="10" viewBox="0 0 10 10"><path d="M0 1 H9 M0 3.7 H7 M0 6.4 H9 M0 9.1 H7" stroke="#aaa" stroke-width="0.9"/></svg>
<span class="t" style="left:194px;top:562.5px;height:16px;line-height:16px;font-size:12.5px;color:#aaa;">0</span>
<div class="btn" style="left:273.3px;top:561.6999999999999px;width:15px;height:15px;"></div>
<svg style="left:273.3px;top:561.6999999999999px;" width="15" height="15" viewBox="0 0 15 15"><path d="M7.5 3.2 V11.2 M3.5 7.2 H11.5" stroke="#ddd" stroke-width="1.6"/><path d="M14.5 11.5 V14.5 H11.5 Z" fill="#6fc7a4"/></svg>
<div style="left:6px;top:585px;width:468px;height:23px;background:#3c3c3c;"></div>
<div style="left:6px;top:585px;width:468px;height:1.4px;background:#b48ef5;"></div>
<div style="left:6px;top:585px;width:4px;height:23px;background:#b48ef5;"></div>
<div style="left:470px;top:585px;width:4px;height:23px;background:#b48ef5;border-radius:0 3px 0 0;"></div>
<svg style="left:13.8px;top:594.4px;" width="10.4" height="6.2" viewBox="0 0 10.4 6.2"><path d="M1 1 L5.2 5.2 L9.4 1" fill="none" stroke="#bbb" stroke-width="1.0"/></svg>
<div style="left:28px;top:588px;width:18px;height:18px;background:#2b2b2b;border-radius:3px;"></div>
<svg style="left:30px;top:592.8px;" width="14" height="9" viewBox="0 0 14 9"><ellipse cx="7" cy="4.5" rx="6.2" ry="3.7" fill="none" stroke="#ccc" stroke-width="1"/><circle cx="7" cy="4.5" r="2" fill="#ccc" fill-opacity="0.9"/></svg>
<svg style="left:49px;top:591.3px;" width="12" height="12" viewBox="0 0 12 12"><circle cx="6" cy="6" r="4.1" fill="none" stroke="#777" stroke-width="1"/></svg>
<svg style="left:65px;top:589.5px;" width="16" height="16" viewBox="0 0 16 16"><rect x="1" y="1" width="14" height="14" fill="none" stroke="#ddd" stroke-width="0.9"/><g fill="#eee"><rect x="0" y="0" width="2.2" height="2.2"/><rect x="13.8" y="0" width="2.2" height="2.2"/><rect x="0" y="13.8" width="2.2" height="2.2"/><rect x="13.8" y="13.8" width="2.2" height="2.2"/></g><path d="M4.3 4 H11.7 V5.9 H9 V12.3 H7 V5.9 H4.3 Z" fill="#e3d46f"/></svg>
<span class="t" style="left:87px;top:589.7px;height:16px;line-height:16px;font-size:12.5px;color:#dcdcdc;letter-spacing:-0.338px;">Cavalry</span>
<div class="btn" style="left:365.3px;top:588.4px;width:17px;height:17px;"></div>
<svg style="left:365.3px;top:588.4px;" width="17" height="17" viewBox="0 0 17 17"><rect x="2.5" y="4.5" width="5" height="2" fill="#ddd"/><rect x="2.5" y="10.5" width="5" height="2" fill="#ddd"/><rect x="9.5" y="7.5" width="5" height="2" fill="#ddd"/><path d="M16.6 13 V16.6 H13 Z" fill="#6fc7a4"/></svg>
<div style="left:385.7px;top:588.4px;width:10.0px;height:17.2px;background:#2b2b2b;border-radius:4px 0 0 4px;"></div>
<div style="left:396.3px;top:588.4px;width:10.0px;height:17.2px;background:#2b2b2b;border-radius:0 4px 4px 0;"></div>
<svg style="left:385.7px;top:588.4px;" width="20.6" height="17.2" viewBox="0 0 20.6 17.2"><path d="M8.3 5.3999999999999995 H5.000000000000001 L2.0 8.6 L5.000000000000001 11.8 H8.3 Z" fill="#e3c85a"/><path d="M12.3 5.3999999999999995 H15.600000000000001 L18.6 8.6 L15.600000000000001 11.8 H12.3 Z" fill="#8a8a8a"/></svg>
<div class="btn" style="left:410px;top:588.4px;width:17px;height:17px;background:#383838;"></div>
<svg style="left:410px;top:588.4px;" width="17" height="17" viewBox="0 0 17 17"><path d="M6.3 2.8 H10.7 V4 L10 4.5 V7.8 L12 10 H5 L7 7.8 V4.5 L6.3 4 Z" fill="#ddd"/><path d="M8.5 10 V14.8" stroke="#ddd" stroke-width="1"/></svg>
<div class="btn" style="left:430.4px;top:588.4px;width:17px;height:17px;"></div>
<svg style="left:430.4px;top:588.4px;" width="17" height="17" viewBox="0 0 17 17"><g fill="#ddd"><circle cx="4.5" cy="4.5" r="1"/><circle cx="11" cy="4.5" r="1"/><circle cx="4.5" cy="10.5" r="1"/><path d="M10.5 7.5 L11.5 10 L14 11 L11.5 12 L10.5 14.5 L9.5 12 L7 11 L9.5 10 Z"/></g><path d="M16.6 13 V16.6 H13 Z" fill="#6fc7a4"/></svg>
<div class="btn" style="left:450.5px;top:588.4px;width:17px;height:17px;"></div>
<svg style="left:450.5px;top:588.4px;" width="17" height="17" viewBox="0 0 17 17"><path d="M4.5 4.5 L12.5 12.5 M12.5 4.5 L4.5 12.5" stroke="#ddd" stroke-width="1"/></svg>
<div style="left:6px;top:608px;width:468px;height:22px;background:#2b2b2b;"></div>
<div style="left:9px;top:610px;width:78px;height:20px;background:#4a4a4a;border-radius:4px 4px 0 0;"></div>
<span class="t" style="left:31.8px;top:612.0px;height:16px;line-height:16px;font-size:12.5px;color:#dcdcdc;letter-spacing:-0.829px;">Shape</span>
<span class="t" style="left:94.3px;top:612.0px;height:16px;line-height:16px;font-size:12.5px;color:#c8c8c8;letter-spacing:-0.371px;">Background</span>
<div style="left:164.5px;top:614px;width:1px;height:11px;background:#9a9a9a;"></div>
<div style="left:170.2px;top:616px;width:9.8px;height:9px;background:#fff;"></div>
<span class="t" style="left:198.5px;top:612.0px;height:16px;line-height:16px;font-size:12.5px;color:#c8c8c8;letter-spacing:0.008px;">Fill</span>
<div style="left:241.0px;top:614px;width:1px;height:11px;background:#9a9a9a;"></div>
<div style="left:246px;top:614.5px;width:11.5px;height:11.5px;background:#2b2b2b;border-radius:2px;"></div>
<svg style="left:246px;top:614.5px;" width="11.5" height="11.5" viewBox="0 0 11.5 11.5"><path d="M1.5 10 L10 1.5" stroke="#c0504d" stroke-width="1"/></svg>
<span class="t" style="left:266px;top:612.0px;height:16px;line-height:16px;font-size:12.5px;color:#c8c8c8;letter-spacing:-0.237px;">Stroke</span>
<div style="left:318.0px;top:614px;width:1px;height:11px;background:#9a9a9a;"></div>
<span class="t" style="left:340px;top:612.0px;height:16px;line-height:16px;font-size:12.5px;color:#c8c8c8;letter-spacing:-0.423px;">Masks</span>
<div style="left:395.0px;top:614px;width:1px;height:11px;background:#9a9a9a;"></div>
<span class="t" style="left:407.8px;top:612.0px;height:16px;line-height:16px;font-size:12.5px;color:#c8c8c8;letter-spacing:-0.449px;">Advanced</span>
<div style="left:6px;top:630px;width:468px;height:228px;background:#3a3a3a;border-radius:0 3px 0 0;"></div>
<svg style="left:12.8px;top:635.2px;" width="12" height="12" viewBox="0 0 12 12"><circle cx="6" cy="6" r="4.1" fill="none" stroke="#8c8c8c" stroke-width="1"/></svg>
<span class="t" style="left:30px;top:633.9000000000001px;height:16px;line-height:16px;font-size:12.5px;color:#dcdcdc;letter-spacing:-0.246px;">Position</span>
<div class="inp" style="left:177px;top:633.7px;width:94px;height:15.3px;"></div>
<span class="t" style="left:181.3px;top:634.0px;height:16px;line-height:16px;font-size:12px;color:#777;">X</span>
<span class="t" style="left:194px;top:633.9000000000001px;height:16px;line-height:16px;font-size:12.5px;color:#dcdcdc;letter-spacing:-0.052px;">-211.464</span>
<div class="inp" style="left:277px;top:633.7px;width:94px;height:15.3px;"></div>
<span class="t" style="left:281.4px;top:634.0px;height:16px;line-height:16px;font-size:12px;color:#777;">Y</span>
<span class="t" style="left:294.5px;top:633.9000000000001px;height:16px;line-height:16px;font-size:12.5px;color:#dcdcdc;letter-spacing:-0.205px;">51.366</span>
<svg style="left:12.8px;top:657.2px;" width="12" height="12" viewBox="0 0 12 12"><circle cx="6" cy="6" r="4.1" fill="none" stroke="#8c8c8c" stroke-width="1"/></svg>
<span class="t" style="left:30px;top:655.9000000000001px;height:16px;line-height:16px;font-size:12.5px;color:#dcdcdc;letter-spacing:-0.194px;">Rotation</span>
<div class="inp" style="left:177px;top:655.7px;width:94px;height:15.3px;"></div>
<span class="t" style="left:181.3px;top:656.0px;height:16px;line-height:16px;font-size:12px;color:#777;">Z</span>
<span class="t" style="left:194px;top:655.9000000000001px;height:16px;line-height:16px;font-size:12.5px;color:#dcdcdc;letter-spacing:-0.292px;">0.0</span>
<svg style="left:12.8px;top:679.2px;" width="12" height="12" viewBox="0 0 12 12"><circle cx="6" cy="6" r="4.1" fill="none" stroke="#8c8c8c" stroke-width="1"/></svg>
<span class="t" style="left:30px;top:677.9000000000001px;height:16px;line-height:16px;font-size:12.5px;color:#dcdcdc;letter-spacing:-0.854px;">Scale</span>
<div class="inp" style="left:177px;top:677.7px;width:94px;height:15.3px;"></div>
<span class="t" style="left:181.3px;top:678.0px;height:16px;line-height:16px;font-size:12px;color:#777;">X</span>
<span class="t" style="left:194px;top:677.9000000000001px;height:16px;line-height:16px;font-size:12.5px;color:#dcdcdc;letter-spacing:-0.458px;">1.0</span>
<div class="inp" style="left:277px;top:677.7px;width:94px;height:15.3px;"></div>
<span class="t" style="left:281.4px;top:678.0px;height:16px;line-height:16px;font-size:12px;color:#777;">Y</span>
<span class="t" style="left:294.5px;top:677.9000000000001px;height:16px;line-height:16px;font-size:12.5px;color:#dcdcdc;letter-spacing:-0.458px;">1.0</span>
<svg style="left:12.8px;top:701.2px;" width="12" height="12" viewBox="0 0 12 12"><circle cx="6" cy="6" r="4.1" fill="none" stroke="#8c8c8c" stroke-width="1"/></svg>
<span class="t" style="left:30px;top:699.9000000000001px;height:16px;line-height:16px;font-size:12.5px;color:#dcdcdc;letter-spacing:-0.767px;">Skew</span>
<div class="inp" style="left:177px;top:699.7px;width:94px;height:15.3px;"></div>
<span class="t" style="left:181.3px;top:700.0px;height:16px;line-height:16px;font-size:12px;color:#777;">X</span>
<span class="t" style="left:194px;top:699.9000000000001px;height:16px;line-height:16px;font-size:12.5px;color:#dcdcdc;letter-spacing:-0.292px;">0.0</span>
<div class="inp" style="left:277px;top:699.7px;width:94px;height:15.3px;"></div>
<span class="t" style="left:281.4px;top:700.0px;height:16px;line-height:16px;font-size:12px;color:#777;">Y</span>
<span class="t" style="left:294.5px;top:699.9000000000001px;height:16px;line-height:16px;font-size:12.5px;color:#dcdcdc;letter-spacing:-0.292px;">0.0</span>
<svg style="left:12.8px;top:723.2px;" width="12" height="12" viewBox="0 0 12 12"><circle cx="6" cy="6" r="4.1" fill="none" stroke="#8c8c8c" stroke-width="1"/></svg>
<span class="t" style="left:30px;top:721.9000000000001px;height:16px;line-height:16px;font-size:12.5px;color:#dcdcdc;letter-spacing:-0.158px;">Pivot</span>
<div class="inp" style="left:177px;top:721.7px;width:94px;height:15.3px;"></div>
<span class="t" style="left:181.3px;top:722.0px;height:16px;line-height:16px;font-size:12px;color:#777;">X</span>
<span class="t" style="left:194px;top:721.9000000000001px;height:16px;line-height:16px;font-size:12.5px;color:#dcdcdc;letter-spacing:-0.292px;">0.0</span>
<div class="inp" style="left:277px;top:721.7px;width:94px;height:15.3px;"></div>
<span class="t" style="left:281.4px;top:722.0px;height:16px;line-height:16px;font-size:12px;color:#777;">Y</span>
<span class="t" style="left:294.5px;top:721.9000000000001px;height:16px;line-height:16px;font-size:12.5px;color:#dcdcdc;letter-spacing:-0.292px;">0.0</span>
<div class="btn" style="left:377.4px;top:677.5px;width:15.3px;height:15.5px;"></div>
<svg style="left:377.4px;top:677.5px;" width="15.3" height="15.5" viewBox="0 0 15.3 15.5"><path d="M5.2 6.3 V5.2 a2.4 2.4 0 0 1 4.8 0 V6.3 M5.2 9.2 V10.3 a2.4 2.4 0 0 0 4.8 0 V9.2" fill="none" stroke="#ccc" stroke-width="1"/></svg>
<div style="left:6px;top:742px;width:468px;height:1px;background:#262626;"></div>
<svg style="left:12.8px;top:750.2px;" width="12" height="12" viewBox="0 0 12 12"><circle cx="6" cy="6" r="4.1" fill="none" stroke="#8c8c8c" stroke-width="1"/></svg>
<span class="t" style="left:30px;top:748.9000000000001px;height:16px;line-height:16px;font-size:12.5px;color:#dcdcdc;letter-spacing:-0.196px;">Opacity</span>
<div style="left:177px;top:754.7px;width:189px;height:3.2px;background:#dedede;border-radius:2px;"></div>
<div style="left:360.5px;top:751.0px;width:11px;height:11px;background:#6fc7a4;border-radius:6px;"></div>
<div style="left:363.5px;top:754.0px;width:5px;height:5px;background:#58a78a;border-radius:3px;"></div>
<div class="inp" style="left:377.4px;top:748.7px;width:94px;height:15.3px;"></div>
<span class="t" style="left:381px;top:749.0px;height:16px;line-height:16px;font-size:11px;color:#777;">%</span>
<span class="t" style="left:394.8px;top:748.9000000000001px;height:16px;line-height:16px;font-size:12.5px;color:#dcdcdc;letter-spacing:-0.355px;">100.0</span>
<svg style="left:12.8px;top:772.2px;" width="12" height="12" viewBox="0 0 12 12"><circle cx="6" cy="6" r="4.1" fill="none" stroke="#8c8c8c" stroke-width="1"/></svg>
<span class="t" style="left:30px;top:770.9000000000001px;height:16px;line-height:16px;font-size:12.5px;color:#dcdcdc;letter-spacing:-0.371px;">Blend Mode</span>
<div style="left:177.5px;top:770.8000000000001px;width:192.5px;height:14px;background:#4d4d4d;border-radius:2px;"></div>
<span class="t" style="left:180.5px;top:770.9000000000001px;height:16px;line-height:16px;font-size:12.5px;color:#dcdcdc;letter-spacing:-0.214px;">Normal</span>
<svg style="left:356.8px;top:775.8000000000001px;" width="10.4" height="6.2" viewBox="0 0 10.4 6.2"><path d="M1 1 L5.2 5.2 L9.4 1" fill="none" stroke="#ccc" stroke-width="1.0"/></svg>
<span class="t" style="left:30px;top:792.9000000000001px;height:16px;line-height:16px;font-size:12.5px;color:#dcdcdc;letter-spacing:-0.149px;">Deformers</span>
<div class="inp" style="left:177px;top:792.7px;width:94px;height:15.3px;"></div>
<svg style="left:180px;top:795.7px;" width="10" height="10" viewBox="0 0 10 10"><path d="M0 1 H9 M0 3.7 H7 M0 6.4 H9 M0 9.1 H7" stroke="#aaa" stroke-width="0.9"/></svg>
<span class="t" style="left:194px;top:792.9000000000001px;height:16px;line-height:16px;font-size:12.5px;color:#aaa;">0</span>
<div class="btn" style="left:273.3px;top:793.0px;width:15px;height:15px;"></div>
<svg style="left:273.3px;top:793.0px;" width="15" height="15" viewBox="0 0 15 15"><path d="M7.5 3.2 V11.2 M3.5 7.2 H11.5" stroke="#ddd" stroke-width="1.6"/><path d="M14.5 11.5 V14.5 H11.5 Z" fill="#6fc7a4"/></svg>
<div class="btn" style="left:398.3px;top:792.4000000000001px;width:15.5px;height:15.5px;"></div>
<div class="btn" style="left:416.3px;top:792.4000000000001px;width:15.5px;height:15.5px;"></div>
<div class="btn" style="left:434.5px;top:792.4000000000001px;width:15.5px;height:15.5px;"></div>
<div class="btn" style="left:455.3px;top:792.4000000000001px;width:15.5px;height:15.5px;"></div>
<div style="left:452.5px;top:789.7px;width:1px;height:22px;background:#555;"></div>
<svg style="left:398.3px;top:792.4000000000001px;" width="15.5" height="15.5" viewBox="0 0 15.5 15.5"><path d="M2.5 4.2 H13" stroke="#8fd68f" stroke-width="1.9"/><path d="M2.5 7.7 H13 M2.5 11.2 H13" stroke="#ddd" stroke-width="1.9"/></svg>
<svg style="left:416.3px;top:792.4000000000001px;" width="15.5" height="15.5" viewBox="0 0 15.5 15.5"><path d="M2 8 C3 2 6.5 2 7.7 8 C9 14 12.5 14 13.5 8" fill="none" stroke="#ddd" stroke-width="1.2"/><path d="M2 7 V11 L5 11" fill="none" stroke="#8fd68f" stroke-width="1"/><path d="M13.5 9 V5 L10.5 5" fill="none" stroke="#8fd68f" stroke-width="1"/></svg>
<svg style="left:434.5px;top:792.4000000000001px;" width="15.5" height="15.5" viewBox="0 0 15.5 15.5"><path d="M3 3 V12.5 L13 8 Z" fill="none" stroke="#8fd68f" stroke-width="1.2"/><path d="M5.5 5.5 V10.5 C9 10.5 10 8.5 10 8 C10 7 9 5.5 5.5 5.5 Z" fill="none" stroke="#8fd68f" stroke-width="1"/></svg>
<svg style="left:455.3px;top:792.4000000000001px;" width="15.5" height="15.5" viewBox="0 0 15.5 15.5"><path d="M3.5 2 V12 H14" fill="none" stroke="#ddd" stroke-width="1.1"/><path d="M5 10.5 L11 4.5 M8 4 H11.5 V7.5" fill="none" stroke="#ddd" stroke-width="1"/><path d="M15 12 V15 H12 Z" fill="#6fc7a4"/></svg>
<span class="t" style="left:30px;top:814.9000000000001px;height:16px;line-height:16px;font-size:12.5px;color:#dcdcdc;letter-spacing:-0.075px;">Filters</span>
<div class="inp" style="left:177px;top:814.7px;width:94px;height:15.3px;"></div>
<svg style="left:180px;top:817.7px;" width="10" height="10" viewBox="0 0 10 10"><path d="M0 1 H9 M0 3.7 H7 M0 6.4 H9 M0 9.1 H7" stroke="#aaa" stroke-width="0.9"/></svg>
<span class="t" style="left:194px;top:814.9000000000001px;height:16px;line-height:16px;font-size:12.5px;color:#aaa;">0</span>
<div class="btn" style="left:273.3px;top:815.0px;width:15px;height:15px;"></div>
<svg style="left:273.3px;top:815.0px;" width="15" height="15" viewBox="0 0 15 15"><path d="M7.5 3.2 V11.2 M3.5 7.2 H11.5" stroke="#ddd" stroke-width="1.6"/><path d="M14.5 11.5 V14.5 H11.5 Z" fill="#6fc7a4"/></svg>
<svg style="left:12.8px;top:838.2px;" width="12" height="12" viewBox="0 0 12 12"><circle cx="6" cy="6" r="4.1" fill="none" stroke="#8c8c8c" stroke-width="1"/></svg>
<span class="t" style="left:30px;top:836.9000000000001px;height:16px;line-height:16px;font-size:12.5px;color:#dcdcdc;letter-spacing:-0.020px;">Motion Blur</span>
<div style="left:177.5px;top:836.8000000000001px;width:192.5px;height:14px;background:#4d4d4d;border-radius:2px;"></div>
<span class="t" style="left:180.5px;top:836.9000000000001px;height:16px;line-height:16px;font-size:12.5px;color:#dcdcdc;letter-spacing:-0.345px;">None</span>
<svg style="left:356.8px;top:841.8000000000001px;" width="10.4" height="6.2" viewBox="0 0 10.4 6.2"><path d="M1 1 L5.2 5.2 L9.4 1" fill="none" stroke="#ccc" stroke-width="1.0"/></svg>
<div style="left:6px;top:857.5px;width:468px;height:1px;background:#262626;"></div>
<div style="left:6px;top:858.5px;width:468px;height:165.5px;background:#3a3a3a;"></div>
<div style="left:9px;top:861px;width:463px;height:85.5px;background:#4a4a4a;border-radius:3px;"></div>
<svg style="left:12.8px;top:865.2px;" width="12" height="12" viewBox="0 0 12 12"><circle cx="6" cy="6" r="4.1" fill="none" stroke="#8c8c8c" stroke-width="1"/></svg>
<span class="t" style="left:30px;top:863.8px;height:16px;line-height:16px;font-size:12.5px;color:#dcdcdc;letter-spacing:-0.192px;">String</span>
<div style="left:169.3px;top:862.5px;width:9.899999999999999px;height:17px;background:#2b2b2b;border-radius:4px 0 0 4px;"></div>
<div style="left:179.8px;top:862.5px;width:9.899999999999999px;height:17px;background:#2b2b2b;border-radius:0 4px 4px 0;"></div>
<svg style="left:169.3px;top:862.5px;" width="20.4" height="17" viewBox="0 0 20.4 17"><path d="M8.2 5.3 H4.8999999999999995 L1.8999999999999986 8.5 L4.8999999999999995 11.7 H8.2 Z" fill="#e3c85a"/><path d="M12.2 5.3 H15.5 L18.5 8.5 L15.5 11.7 H12.2 Z" fill="#999"/></svg>
<div class="btn" style="left:192.7px;top:862.5px;width:77.6px;height:17px;"></div>
<div class="btn" style="left:273.4px;top:862.5px;width:78.2px;height:17px;"></div>
<div class="btn" style="left:354.7px;top:862.5px;width:53px;height:17px;"></div>
<div style="left:410.7px;top:862.5px;width:60.3px;height:17px;background:#222;border-radius:4px;box-shadow:0 0 0 1px #555;"></div>
<svg style="left:197px;top:864px;" width="14" height="14" viewBox="0 0 14 14"><path d="M6.5 2 V11.5 M1.8 6.8 H11.2" stroke="#ddd" stroke-width="1.4"/><path d="M13.5 10 V13 H10.5 Z" fill="#ddd"/></svg>
<span class="t" style="left:214px;top:863.8px;height:16px;line-height:16px;font-size:12.5px;color:#bbb;letter-spacing:-0.197px;">Generator</span>
<svg style="left:279px;top:865px;" width="10" height="12" viewBox="0 0 10 12"><ellipse cx="5" cy="6" rx="3.6" ry="4.7" fill="none" stroke="#ddd" stroke-width="1.3" transform="rotate(12 5 6)"/></svg>
<span class="t" style="left:295px;top:863.8px;height:16px;line-height:16px;font-size:12.5px;color:#bbb;letter-spacing:-0.459px;">OpenType</span>
<svg style="left:358.5px;top:865px;" width="13" height="12" viewBox="0 0 13 12"><path d="M3.2 7 A4 4 0 1 0 5.5 3" fill="none" stroke="#ddd" stroke-width="1.2"/><path d="M1 4.5 L5.5 5.5 L4.5 1 Z" fill="#ddd"/></svg>
<span class="t" style="left:376.3px;top:863.8px;height:16px;line-height:16px;font-size:12.5px;color:#bbb;letter-spacing:-0.630px;">Reset</span>
<svg style="left:415.5px;top:865px;" width="12" height="12" viewBox="0 0 12 12"><path d="M6 1.5 L11 10.5 H1 Z" fill="none" stroke="#ddd" stroke-width="1.1"/></svg>
<span class="t" style="left:432px;top:863.8px;height:16px;line-height:16px;font-size:12.5px;color:#dcdcdc;letter-spacing:-0.400px;">Glyphs</span>
<div style="left:29.2px;top:884px;width:442.8px;height:62px;background:#262626;"></div>
<span class="t" style="left:35px;top:887.6px;height:16px;line-height:16px;font-size:12px;color:#484848;">T</span>
<span class="t" style="left:49px;top:887.6px;height:16px;line-height:16px;font-size:12.5px;color:#d8c777;letter-spacing:-0.120px;">00000.000</span>
<svg style="left:12.8px;top:952.9px;" width="12" height="12" viewBox="0 0 12 12"><circle cx="6" cy="6" r="4.1" fill="none" stroke="#8c8c8c" stroke-width="1"/></svg>
<span class="t" style="left:30px;top:951.6px;height:16px;line-height:16px;font-size:12.5px;color:#dcdcdc;letter-spacing:-0.252px;">Font</span>
<div style="left:178px;top:951.4px;width:190px;height:16px;background:#262626;border-radius:3px;"></div>
<span class="t" style="left:181px;top:951.6px;height:16px;line-height:16px;font-size:12.5px;color:#dcdcdc;letter-spacing:0.076px;">Montserrat</span>
<svg style="left:354.8px;top:956.5px;" width="10.4" height="6.2" viewBox="0 0 10.4 6.2"><path d="M1 1 L5.2 5.2 L9.4 1" fill="none" stroke="#ccc" stroke-width="1.0"/></svg>
<div style="left:372px;top:951.4px;width:99px;height:16px;background:#262626;border-radius:3px;"></div>
<span class="t" style="left:375.3px;top:951.6px;height:16px;line-height:16px;font-size:12.5px;color:#dcdcdc;letter-spacing:-0.467px;">Regular</span>
<svg style="left:456.8px;top:956.5px;" width="10.4" height="6.2" viewBox="0 0 10.4 6.2"><path d="M1 1 L5.2 5.2 L9.4 1" fill="none" stroke="#ccc" stroke-width="1.0"/></svg>
<svg style="left:12.8px;top:975.0px;" width="12" height="12" viewBox="0 0 12 12"><circle cx="6" cy="6" r="4.1" fill="none" stroke="#8c8c8c" stroke-width="1"/></svg>
<span class="t" style="left:30px;top:973.7px;height:16px;line-height:16px;font-size:12.5px;color:#dcdcdc;letter-spacing:-0.465px;">Typeface</span>
<div style="left:177.5px;top:972.0px;width:293.5px;height:19px;background:#2d2d2d;border-radius:2px;"></div>
<span class="t" style="left:181px;top:973.8px;height:16px;line-height:16px;font-size:12px;color:#5c5c5c;">C</span>
<span class="t" style="left:194px;top:973.7px;height:16px;line-height:16px;font-size:12.5px;color:#777;letter-spacing:-0.284px;">No Connection</span>
<svg style="left:12.8px;top:997.1px;" width="12" height="12" viewBox="0 0 12 12"><circle cx="6" cy="6" r="4.1" fill="none" stroke="#8c8c8c" stroke-width="1"/></svg>
<span class="t" style="left:30px;top:995.8000000000001px;height:16px;line-height:16px;font-size:12.5px;color:#dcdcdc;letter-spacing:-0.589px;">Font Size</span>
<div class="inp" style="left:178px;top:996.1px;width:92px;height:15px;"></div>
<span class="t" style="left:182px;top:995.9px;height:16px;line-height:16px;font-size:11px;color:#727272;">#</span>
<span class="t" style="left:194px;top:995.8000000000001px;height:16px;line-height:16px;font-size:12.5px;color:#dcdcdc;letter-spacing:-0.207px;">72.0</span>
<span class="t" style="left:30px;top:1017.8px;height:16px;line-height:16px;font-size:12.5px;color:#dcdcdc;letter-spacing:-0.158px;">Style</span>
<div class="btn" style="left:177.5px;top:1016.7px;width:16.5px;height:16px;"></div>
<span class="t" style="left:182.0px;top:1017.0999999999999px;height:16px;line-height:16px;font-size:11px;color:#ccc;">U</span>
<div class="btn" style="left:197.8px;top:1016.7px;width:16.5px;height:16px;"></div>
<span class="t" style="left:202.3px;top:1017.0999999999999px;height:16px;line-height:16px;font-size:11px;color:#ccc;">S</span>
<div class="btn" style="left:218.1px;top:1016.7px;width:16.5px;height:16px;"></div>
<span class="t" style="left:222.6px;top:1017.0999999999999px;height:16px;line-height:16px;font-size:11px;color:#ccc;">T</span>
<div class="btn" style="left:238.4px;top:1016.7px;width:16.5px;height:16px;"></div>
<span class="t" style="left:242.9px;top:1017.0999999999999px;height:16px;line-height:16px;font-size:11px;color:#ccc;">T</span>
<div class="btn" style="left:258.7px;top:1016.7px;width:16.5px;height:16px;"></div>
<svg style="left:258.7px;top:1016.7px;" width="16.5" height="16" viewBox="0 0 16.5 16"><circle cx="8.2" cy="8" r="3.5" fill="#ddd"/><path d="M8.2 2 V14 M2.2 8 H14.2 M4 3.8 L12.4 12.2 M12.4 3.8 L4 12.2" stroke="#ddd" stroke-width="1.6"/></svg>
<div style="left:0px;top:1024px;width:494px;height:6px;background:#1e1e1e;"></div>
<div style="left:494px;top:85px;width:30px;height:495px;background:#444;"></div>
<div style="left:494px;top:85px;width:30px;height:10px;background:#3c3c3c;"></div>
<div style="left:502.8px;top:89px;width:2.2px;height:2.2px;background:#888;"></div>
<div style="left:507.8px;top:89px;width:2.2px;height:2.2px;background:#888;"></div>
<div style="left:512.8px;top:89px;width:2.2px;height:2.2px;background:#888;"></div>
<div style="left:495px;top:96px;width:28px;height:28px;background:#121212;border-radius:4px;"></div>
<svg style="left:497px;top:98px;" width="24" height="24" viewBox="0 0 24 24"><path d="M7.6 1.8 L7.25 18.6 L11.2 15.5 L13.9 20.5 L16.5 19.25 L13.9 14.2 L19 13.2 Z" fill="none" stroke="#2ecc71" stroke-width="1.3" stroke-linejoin="round"/></svg>
<svg style="left:497px;top:128px;" width="24" height="24" viewBox="0 0 24 24"><path d="M7 1.9 L21.3 15.5 L12 16 L7 22.1 Z" fill="#dcdcdc"/></svg>
<svg style="left:497px;top:158px;" width="24" height="24" viewBox="0 0 24 24"><path d="M4.5 4.5 L13.5 7 L17.5 13.5 L13.5 17.5 L7 13.5 Z" fill="#dcdcdc"/><path d="M4.5 4.5 L10.5 10.5" stroke="#444" stroke-width="1"/><circle cx="11" cy="11" r="1.3" fill="#444"/><path d="M15 19 L19 15 L20.5 16.5 L16.5 20.5 Z" fill="#dcdcdc"/></svg>
<svg style="left:497px;top:188px;" width="24" height="24" viewBox="0 0 24 24"><path d="M5.5 17 L16 6.5 L18 8.5 L7.5 19 Z" fill="#dcdcdc"/><path d="M17 5.5 L18.3 4.2 a1.2 1.2 0 0 1 1.8 0 L20.3 4.5 a1.2 1.2 0 0 1 0 1.8 L19 7.5 Z" fill="#dcdcdc"/><path d="M4.8 18 L3.5 21 L6.5 19.7 Z" fill="#dcdcdc"/></svg>
<svg style="left:497px;top:217.5px;" width="24" height="24" viewBox="0 0 24 24"><rect x="2" y="7" width="12.2" height="11.5" rx="1.5" fill="#dcdcdc"/><path d="M15 12 L22 8 V17.8 L15 14.2 Z" fill="#dcdcdc"/><rect x="4" y="4.8" width="7" height="1.1" fill="#dcdcdc"/><circle cx="5" cy="10" r="1.2" fill="#444"/></svg>
<svg style="left:497px;top:248px;" width="24" height="24" viewBox="0 0 24 24"><path d="M4 20 L20 5" stroke="#dcdcdc" stroke-width="1.1"/></svg>
<svg style="left:497px;top:277.6px;" width="24" height="24" viewBox="0 0 24 24"><path d="M5 4.5 H19 V7.5 H13.7 V20 H10.3 V7.5 H5 Z" fill="#dcdcdc"/></svg>
<svg style="left:497px;top:308px;" width="24" height="24" viewBox="0 0 24 24"><path d="M3.8 3.7 V15.1 L7 11.5 L11.4 11.3 Z" fill="#dcdcdc"/><path d="M9 5 L15.2 4.4 M17.4 6.9 L19.6 17.6" fill="none" stroke="#aaa" stroke-width="0.9"/><path d="M6.4 19.5 H18.4" stroke="#dcdcdc" stroke-width="1.1"/><path d="M4.1 18 V16" stroke="#aaa" stroke-width="0.9"/><g fill="#dcdcdc"><rect x="15.6" y="3" width="2.2" height="2.2"/><rect x="18.8" y="18.4" width="2.2" height="2.2"/><rect x="3" y="18.4" width="2.2" height="2.2"/></g></svg>
<svg style="left:497px;top:338px;" width="24" height="24" viewBox="0 0 24 24"><rect x="5" y="5" width="14" height="14" fill="#dcdcdc"/></svg>
<svg style="left:497px;top:368px;" width="24" height="24" viewBox="0 0 24 24"><circle cx="12" cy="12" r="8" fill="#dcdcdc"/></svg>
<svg style="left:497px;top:398px;" width="24" height="24" viewBox="0 0 24 24"><path d="M12 4 L20.5 10.2 L17.3 20 H6.7 L3.5 10.2 Z" fill="#dcdcdc"/></svg>
<svg style="left:497px;top:428px;" width="24" height="24" viewBox="0 0 24 24"><path d="M12 3 L14.5 9.3 L21.3 9.8 L16 14.1 L17.8 20.7 L12 17 L6.2 20.7 L8 14.1 L2.7 9.8 L9.5 9.3 Z" fill="#dcdcdc"/></svg>
<svg style="left:497px;top:458px;" width="24" height="24" viewBox="0 0 24 24"><path d="M10 19 A6.3 6.3 0 1 1 18.3 12.5" fill="none" stroke="#dcdcdc" stroke-width="2.8"/></svg>
<svg style="left:497px;top:488px;" width="24" height="24" viewBox="0 0 24 24"><path d="M12 2.5 C12.8 8.5 14.5 10.8 21 12 C14.5 13.2 12.8 15.5 12 21.5 C11.2 15.5 9.5 13.2 3 12 C9.5 10.8 11.2 8.5 12 2.5 Z" fill="#dcdcdc"/></svg>
<svg style="left:497px;top:518px;" width="24" height="24" viewBox="0 0 24 24"><circle cx="12" cy="12" r="5.2" fill="none" stroke="#dcdcdc" stroke-width="3.4"/><path d="M12 3 V21 M3 12 H21 M5.6 5.6 L18.4 18.4 M18.4 5.6 L5.6 18.4" stroke="#dcdcdc" stroke-width="3" stroke-dasharray="3.2 11.6 3.2 0"/></svg>
<svg style="left:501px;top:565px;" width="16" height="12" viewBox="0 0 16 12"><path d="M2 1.5 L7 6 L2 10.5 M8.5 1.5 L13.5 6 L8.5 10.5" fill="none" stroke="#bbb" stroke-width="1.1"/></svg>
<div class="tab" style="left:530px;top:85px;width:87px;height:22px;"></div>
<span class="t" style="left:535.5px;top:88.5px;height:16px;line-height:16px;font-size:12.5px;color:#dcdcdc;letter-spacing:-0.284px;">Composition 3</span>
<div style="left:530px;top:107px;width:1057.3px;height:450.5px;background:#000;"></div>
<div style="left:694px;top:127px;width:728.3px;height:409.6px;background:#00aeff;"></div>
<div style="left:1012.7px;top:286.8px;width:90.7px;height:90.7px;background:#3ce38e;border-radius:50%;"></div>
<span class="t" style="left:978px;top:313.6px;height:32px;line-height:32px;font-size:26.6px;color:#fff;-webkit-text-stroke:0.35px #fff;transform-origin:0 50%;transform:scaleX(1.274);">00000.000</span>
<span class="t" style="left:569.5px;top:459.4px;height:16px;line-height:16px;font-size:12.5px;color:#fff;letter-spacing:-0.586px;">Hold S</span>
<span class="t" style="left:569.5px;top:473.45px;height:16px;line-height:16px;font-size:12.5px;color:#fff;letter-spacing:-0.928px;">Space</span>
<span class="t" style="left:569.5px;top:487.5px;height:16px;line-height:16px;font-size:12.5px;color:#fff;letter-spacing:-0.588px;">Space + click + drag</span>
<span class="t" style="left:569.5px;top:501.54999999999995px;height:16px;line-height:16px;font-size:12.5px;color:#fff;letter-spacing:-0.356px;">Alt + click + drag</span>
<span class="t" style="left:569.5px;top:515.6px;height:16px;line-height:16px;font-size:12.5px;color:#fff;letter-spacing:-0.102px;">Shift</span>
<div style="left:530px;top:455px;width:164px;height:80px;overflow:hidden;">
<span class="t" style="left:76.10000000000002px;top:4.399999999999977px;height:16px;line-height:16px;font-size:12.5px;color:#505050;letter-spacing:-0.317px;">Direct Layer Selection</span>
<span class="t" style="left:72.89999999999998px;top:18.44999999999999px;height:16px;line-height:16px;font-size:12.5px;color:#505050;letter-spacing:-0.397px;">Play/ Stop</span>
<span class="t" style="left:143.60000000000002px;top:32.5px;height:16px;line-height:16px;font-size:12.5px;color:#505050;letter-spacing:-0.913px;">Pan</span>
<span class="t" style="left:128.10000000000002px;top:46.549999999999955px;height:16px;line-height:16px;font-size:12.5px;color:#505050;letter-spacing:-0.206px;">Move Pivot Point</span>
<span class="t" style="left:66.60000000000002px;top:60.60000000000002px;height:16px;line-height:16px;font-size:12.5px;color:#505050;letter-spacing:-0.614px;">Enable Snapping</span>
</div>
<div style="left:694px;top:455px;width:728.3px;height:80px;overflow:hidden;">
<span class="t" style="left:-87.89999999999998px;top:4.399999999999977px;height:16px;line-height:16px;font-size:12.5px;color:#4a70cd;letter-spacing:-0.317px;">Direct Layer Selection</span>
<span class="t" style="left:-91.10000000000002px;top:18.44999999999999px;height:16px;line-height:16px;font-size:12.5px;color:#4a70cd;letter-spacing:-0.397px;">Play/ Stop</span>
<span class="t" style="left:-20.399999999999977px;top:32.5px;height:16px;line-height:16px;font-size:12.5px;color:#4a70cd;letter-spacing:-0.913px;">Pan</span>
<span class="t" style="left:-35.89999999999998px;top:46.549999999999955px;height:16px;line-height:16px;font-size:12.5px;color:#4a70cd;letter-spacing:-0.206px;">Move Pivot Point</span>
<span class="t" style="left:-97.39999999999998px;top:60.60000000000002px;height:16px;line-height:16px;font-size:12.5px;color:#4a70cd;letter-spacing:-0.614px;">Enable Snapping</span>
</div>
<span class="t" style="left:858px;width:400px;text-align:center;top:535.6px;height:16px;line-height:16px;font-size:12.5px;color:#fff;letter-spacing:-0.129px;">Viewport Quality: High</span>
<div style="left:530px;top:557.5px;width:1057.3px;height:22.5px;background:#444;"></div>
<div style="left:535px;top:561.5px;width:78px;height:16px;background:#2b2b2b;border-radius:3px;"></div>
<span class="t" style="left:538.5px;top:562.0px;height:16px;line-height:16px;font-size:12.5px;color:#dcdcdc;letter-spacing:-0.839px;">38%</span>
<svg style="left:599.3px;top:566.9px;" width="10.4" height="6.2" viewBox="0 0 10.4 6.2"><path d="M1 1 L5.2 5.2 L9.4 1" fill="none" stroke="#ccc" stroke-width="1.0"/></svg>
<div class="btn" style="left:866.4px;top:559.4px;width:19.7px;height:19.3px;border-radius:4px 1px 1px 4px;"></div>
<div class="btn" style="left:886.35px;top:559.4px;width:19.7px;height:19.3px;border-radius:1px;"></div>
<div class="btn" style="left:906.3px;top:559.4px;width:19.7px;height:19.3px;border-radius:1px;"></div>
<div class="btn" style="left:926.3px;top:559.4px;width:19.7px;height:19.3px;border-radius:1px;"></div>
<div class="btn" style="left:946.3px;top:559.4px;width:19.7px;height:19.3px;border-radius:1px 4px 4px 1px;"></div>
<svg style="left:866.4px;top:559.4px;" width="19.7" height="19.3" viewBox="0 0 19.7 19.3"><rect x="3.4" y="4.4" width="2.2" height="10.4" fill="#ddd"/><path d="M14.8 4.4 V14.8 L6.7 9.6 Z" fill="#ddd"/></svg>
<svg style="left:886.35px;top:559.4px;" width="19.7" height="19.3" viewBox="0 0 19.7 19.3"><rect x="13.5" y="4.4" width="2.3" height="10.4" fill="#ddd"/><path d="M11.7 4.4 V14.8 L4 9.6 Z" fill="#ddd"/></svg>
<svg style="left:906.3px;top:559.4px;" width="19.7" height="19.3" viewBox="0 0 19.7 19.3"><path d="M4.8 4.4 V14.8 L13.8 9.6 Z" fill="#ddd"/></svg>
<svg style="left:926.3px;top:559.4px;" width="19.7" height="19.3" viewBox="0 0 19.7 19.3"><rect x="3.5" y="4.4" width="2.3" height="10.4" fill="#ddd"/><path d="M7.3 4.4 V14.8 L15.4 9.6 Z" fill="#ddd"/></svg>
<svg style="left:946.3px;top:559.4px;" width="19.7" height="19.3" viewBox="0 0 19.7 19.3"><rect x="13.6" y="4.4" width="2.2" height="10.4" fill="#ddd"/><path d="M4.5 4.4 V14.8 L12.9 9.6 Z" fill="#ddd"/></svg>
<div class="btn" style="left:971.3px;top:559.4px;width:19.5px;height:19.3px;"></div>
<svg style="left:971.3px;top:559.4px;" width="19.5" height="19.3" viewBox="0 0 19.5 19.3"><path d="M9.5 7.2 H4.6 a1.2 1.2 0 0 0 -1.2 1.2 V12 a1.2 1.2 0 0 0 1.2 1.2 H15 a1.2 1.2 0 0 0 1.2 -1.2 V8.4 a1.2 1.2 0 0 0 -1.2 -1.2 H14" fill="none" stroke="#ddd" stroke-width="1.3"/><path d="M9.9 4 L15 6.9 L9.9 9.6 Z" fill="#ddd"/></svg>
<div style="left:1232.1px;top:560.1px;width:36.5px;height:17.5px;background:#2b2b2b;border-radius:3px;"></div>
<svg style="left:1234px;top:564.7px;" width="14" height="9" viewBox="0 0 14 9"><path d="M0 4.5 L3.2 0.5 H13.5 V8.5 H3.2 Z" fill="#ddd"/><circle cx="4.4" cy="4.5" r="1.6" fill="#333"/></svg>
<span class="t" style="left:1258px;top:561.3px;height:16px;line-height:16px;font-size:12.5px;color:#8fa3bf;">0</span>
<div style="left:1272.5px;top:559.3px;width:18.5px;height:19.2px;background:#2b2b2b;border-radius:4px 0 0 4px;border:1px solid #272727;box-shadow:inset 0 1px 0 #484848;"></div>
<svg style="left:1272.5px;top:559.9px;" width="18.5" height="18" viewBox="0 0 18.5 18"><path d="M3.5 7 H6 L9.5 4 V14 L6 11 H3.5 Z" fill="#2ecc71"/><path d="M11.2 6.3 A3.5 3.5 0 0 1 11.2 11.7 M12.8 4.3 A6 6 0 0 1 12.8 13.7" fill="none" stroke="#2ecc71" stroke-width="1.1"/></svg>
<div style="left:1290.8px;top:559.3px;width:12.6px;height:19.2px;background:#2b2b2b;border-radius:0 4px 4px 0;border:1px solid #272727;border-left:1px solid #3a3a3a;box-shadow:inset 0 1px 0 #484848;"></div>
<svg style="left:1290.8px;top:559.3px;" width="12.6" height="19.2" viewBox="0 0 12.6 19.2"><path d="M3.5 6.6 L8.5 9.6 L3.5 12.6 Z" fill="none" stroke="#999" stroke-width="0.9"/></svg>
<div style="left:1307.5px;top:559.3px;width:18.5px;height:19.2px;background:#464646;border-radius:4px 0 0 4px;border:1px solid #272727;box-shadow:inset 0 1px 0 #5a5a5a;"></div>
<svg style="left:1307.5px;top:559.9px;" width="18.5" height="18" viewBox="0 0 18.5 18"><g transform="translate(9.6 9.4) rotate(38)"><path d="M-4.1 2.3 V0 A4.1 4.1 0 0 1 4.1 0 V4.8" fill="none" stroke="#ddd" stroke-width="2.3"/></g></svg>
<div style="left:1325.8px;top:559.3px;width:12.6px;height:19.2px;background:#2b2b2b;border-radius:0 4px 4px 0;border:1px solid #272727;border-left:1px solid #3a3a3a;box-shadow:inset 0 1px 0 #484848;"></div>
<svg style="left:1325.8px;top:559.3px;" width="12.6" height="19.2" viewBox="0 0 12.6 19.2"><path d="M3.5 6.6 L8.5 9.6 L3.5 12.6 Z" fill="none" stroke="#999" stroke-width="0.9"/></svg>
<div style="left:1342.8px;top:559.3px;width:18.5px;height:19.2px;background:#464646;border-radius:4px 0 0 4px;border:1px solid #272727;box-shadow:inset 0 1px 0 #5a5a5a;"></div>
<svg style="left:1342.8px;top:559.9px;" width="18.5" height="18" viewBox="0 0 18.5 18"><path d="M7 3.5 V14.5 M11.5 3.5 V14.5 M3.5 6.8 H15 M3.5 11.2 H15" stroke="#ddd" stroke-width="1.1"/></svg>
<div style="left:1361.1px;top:559.3px;width:12.6px;height:19.2px;background:#2b2b2b;border-radius:0 4px 4px 0;border:1px solid #272727;border-left:1px solid #3a3a3a;box-shadow:inset 0 1px 0 #484848;"></div>
<svg style="left:1361.1px;top:559.3px;" width="12.6" height="19.2" viewBox="0 0 12.6 19.2"><path d="M3.5 6.6 L8.5 9.6 L3.5 12.6 Z" fill="none" stroke="#999" stroke-width="0.9"/></svg>
<div style="left:1377.4px;top:559.3px;width:18.5px;height:19.2px;background:#2b2b2b;border-radius:4px;border:1px solid #272727;box-shadow:inset 0 1px 0 #484848;"></div>
<svg style="left:1377.4px;top:559.9px;" width="18.5" height="18" viewBox="0 0 18.5 18"><rect x="2.5" y="4.5" width="3" height="2.2" fill="#2ecc71"/><rect x="2.5" y="7.8" width="3" height="6" fill="#2ecc71"/><rect x="7" y="4.8" width="9" height="5" fill="none" stroke="#2ecc71" stroke-width="1.2"/><rect x="6.5" y="11.2" width="10" height="2.6" fill="#2ecc71"/></svg>
<div style="left:1400.6px;top:559.3px;width:18.5px;height:19.2px;background:#464646;border-radius:4px;border:1px solid #272727;box-shadow:inset 0 1px 0 #5a5a5a;"></div>
<svg style="left:1400.6px;top:559.9px;" width="18.5" height="18" viewBox="0 0 18.5 18"><path d="M3 4.2 V13.8 L7.3 9 Z" fill="#ddd"/><path d="M7.5 4.5 L11.3 9 L7.5 13.5 M11.5 4.5 L15.3 9 L11.5 13.5" fill="none" stroke="#ddd" stroke-width="1.5"/></svg>
<div style="left:1424px;top:559.3px;width:18.5px;height:19.2px;background:#464646;border-radius:4px 0 0 4px;border:1px solid #272727;box-shadow:inset 0 1px 0 #5a5a5a;"></div>
<svg style="left:1424px;top:559.9px;" width="18.5" height="18" viewBox="0 0 18.5 18"><rect x="3" y="4" width="12.5" height="8.5" fill="none" stroke="#ddd" stroke-width="1.1"/><rect x="2.5" y="13" width="13.5" height="1.7" fill="#ddd"/></svg>
<div style="left:1442.3px;top:559.3px;width:12.6px;height:19.2px;background:#2b2b2b;border-radius:0 4px 4px 0;border:1px solid #272727;border-left:1px solid #3a3a3a;box-shadow:inset 0 1px 0 #484848;"></div>
<svg style="left:1442.3px;top:559.3px;" width="12.6" height="19.2" viewBox="0 0 12.6 19.2"><path d="M3.5 6.6 L8.5 9.6 L3.5 12.6 Z" fill="none" stroke="#999" stroke-width="0.9"/></svg>
<div style="left:1458.6px;top:559.3px;width:18.5px;height:19.2px;background:#464646;border-radius:4px 0 0 4px;border:1px solid #272727;box-shadow:inset 0 1px 0 #5a5a5a;"></div>
<svg style="left:1458.6px;top:559.9px;" width="18.5" height="18" viewBox="0 0 18.5 18"><rect x="3" y="4" width="8" height="5" fill="none" stroke="#aaa" stroke-width="1"/><path d="M13 7 V11 H6 M15 9.5 V13 H8.5 M17 11.5 V15 H11" fill="none" stroke="#888" stroke-width="1"/></svg>
<div style="left:1476.8999999999999px;top:559.3px;width:12.6px;height:19.2px;background:#2b2b2b;border-radius:0 4px 4px 0;border:1px solid #272727;border-left:1px solid #3a3a3a;box-shadow:inset 0 1px 0 #484848;"></div>
<svg style="left:1476.8999999999999px;top:559.3px;" width="12.6" height="19.2" viewBox="0 0 12.6 19.2"><path d="M3.5 6.6 L8.5 9.6 L3.5 12.6 Z" fill="none" stroke="#999" stroke-width="0.9"/></svg>
<div style="left:1493.3px;top:559.3px;width:18.5px;height:19.2px;background:#464646;border-radius:4px 0 0 4px;border:1px solid #272727;box-shadow:inset 0 1px 0 #5a5a5a;"></div>
<svg style="left:1493.3px;top:559.9px;" width="18.5" height="18" viewBox="0 0 18.5 18"><rect x="2.5" y="2.5" width="9" height="9" fill="#ccc"/><rect x="7.5" y="7.5" width="8" height="8" fill="#3a3a3a" stroke="#ddd" stroke-width="1.1"/></svg>
<div style="left:1511.6px;top:559.3px;width:12.6px;height:19.2px;background:#2b2b2b;border-radius:0 4px 4px 0;border:1px solid #272727;border-left:1px solid #3a3a3a;box-shadow:inset 0 1px 0 #484848;"></div>
<svg style="left:1511.6px;top:559.3px;" width="12.6" height="19.2" viewBox="0 0 12.6 19.2"><path d="M3.5 6.6 L8.5 9.6 L3.5 12.6 Z" fill="none" stroke="#999" stroke-width="0.9"/></svg>
<div style="left:1528.5px;top:559.3px;width:18.5px;height:19.2px;background:#2b2b2b;border-radius:4px 0 0 4px;border:1px solid #272727;box-shadow:inset 0 1px 0 #484848;"></div>
<svg style="left:1528.5px;top:559.9px;" width="18.5" height="18" viewBox="0 0 18.5 18"><rect x="3.0" y="2.8" width="3.1" height="3.1" fill="#2ecc71"/><rect x="3.0" y="9.0" width="3.1" height="3.1" fill="#2ecc71"/><rect x="6.1" y="5.9" width="3.1" height="3.1" fill="#2ecc71"/><rect x="6.1" y="12.100000000000001" width="3.1" height="3.1" fill="#2ecc71"/><rect x="9.2" y="2.8" width="3.1" height="3.1" fill="#2ecc71"/><rect x="9.2" y="9.0" width="3.1" height="3.1" fill="#2ecc71"/><rect x="12.3" y="5.9" width="3.1" height="3.1" fill="#2ecc71"/><rect x="12.3" y="12.100000000000001" width="3.1" height="3.1" fill="#2ecc71"/></svg>
<div style="left:1546.8px;top:559.3px;width:12.6px;height:19.2px;background:#2b2b2b;border-radius:0 4px 4px 0;border:1px solid #272727;border-left:1px solid #3a3a3a;box-shadow:inset 0 1px 0 #484848;"></div>
<svg style="left:1546.8px;top:559.3px;" width="12.6" height="19.2" viewBox="0 0 12.6 19.2"><path d="M3.5 6.6 L8.5 9.6 L3.5 12.6 Z" fill="none" stroke="#999" stroke-width="0.9"/></svg>
<div style="left:1563.6px;top:559.3px;width:19.2px;height:19.2px;background:#2b2b2b;border-radius:4px;border:1px solid #272727;box-shadow:inset 0 1px 0 #484848;"></div>
<svg style="left:1563.6px;top:559.9px;" width="19.2" height="18" viewBox="0 0 19.2 18"><circle cx="9.5" cy="9" r="3.9" fill="none" stroke="#ddd" stroke-width="2.6"/><path d="M9.5 2 V16 M2.5 9 H16.5 M4.5 4 L14.5 14 M14.5 4 L4.5 14" stroke="#ddd" stroke-width="2.4" stroke-dasharray="2.6 8.8 2.6 0"/></svg>
<div class="tab" style="left:1593px;top:85px;width:40px;height:22px;"></div>
<span class="t" style="left:1598.3px;top:88.5px;height:16px;line-height:16px;font-size:12.5px;color:#dcdcdc;letter-spacing:-0.174px;">Color</span>
<div style="left:1634px;top:85px;width:69px;height:22px;background:#272727;border-radius:4px 4px 0 0;"></div>
<span class="t" style="left:1639.5px;top:88.5px;height:16px;line-height:16px;font-size:12.5px;color:#dcdcdc;letter-spacing:-0.523px;">Add Layers</span>
<div style="left:1593px;top:107px;width:321px;height:377px;background:#444;"></div>
<div style="left:1899.5px;top:107px;width:2.5px;height:377px;background:#2c2c2c;"></div>
<div style="left:1902.6px;top:108.5px;width:9.4px;height:302px;background:#505050;border-radius:5px;"></div>
<div style="left:1645.8px;top:119.6px;width:200px;height:200px;border-radius:50%;background:conic-gradient(from 90deg,#f00,#ff0080,#ec00ec,#8000ff,#00f,#0080ff,#00e4f0,#00ff80,#0f0,#80ff00,#e8e800,#ff8000,#f00);-webkit-mask:radial-gradient(circle,transparent 74.6px,#000 75.4px);mask:radial-gradient(circle,transparent 74.6px,#000 75.4px);"></div>
<div style="left:1702px;top:176px;width:90px;height:90px;background:linear-gradient(to right,#000,rgba(0,0,0,0)),linear-gradient(to bottom,#fff,#00ff7e);"></div>
<div style="left:1665px;top:170px;width:12px;height:12px;border-radius:50%;border:1px solid #f4f4f4;"></div>
<div style="left:1776px;top:236.2px;width:12px;height:12px;border-radius:50%;border:1px solid #f4f4f4;"></div>
<div style="left:1600px;top:332.6px;width:22.2px;height:22.3px;background:#3ce38e;border-radius:3px;"></div>
<div class="btn" style="left:1871.3px;top:333px;width:22px;height:21.6px;"></div>
<svg style="left:1875.5px;top:337px;" width="13.299999999999999" height="13.299999999999999" viewBox="0 0 14 14"><g transform="rotate(45 7 7)"><rect x="5.1" y="-1.6" width="3.8" height="5" rx="1.5" fill="#ddd"/><rect x="4" y="3.2" width="6" height="1.7" rx="0.5" fill="#ddd"/><path d="M5.9 5 V13.2 L7 15 L8.1 13.2 V5" fill="none" stroke="#ddd" stroke-width="0.9"/></g></svg>
<div style="left:1600px;top:360px;width:50px;height:17.5px;background:#4a4a4a;border-radius:3px;box-shadow:0 0 0 1px #5c5c5c;"></div>
<span class="t" style="left:1603px;top:362.0px;height:16px;line-height:16px;font-size:12.5px;color:#dcdcdc;letter-spacing:-0.410px;">Hex</span>
<svg style="left:1635.8px;top:366.2px;" width="10.4" height="6.2" viewBox="0 0 10.4 6.2"><path d="M1 1 L5.2 5.2 L9.4 1" fill="none" stroke="#ccc" stroke-width="1.0"/></svg>
<div style="left:1653px;top:358px;width:240.3px;height:21.8px;background:#262626;border-radius:3px;"></div>
<span class="t" style="left:1657.6px;top:361.5px;height:16px;line-height:16px;font-size:11px;color:#555;">#</span>
<span class="t" style="left:1670.2px;top:362.0px;height:16px;line-height:16px;font-size:12.5px;color:#dcdcdc;letter-spacing:-0.334px;">3ce38e</span>
<div style="left:1600px;top:390.4px;width:234px;height:3.2px;background:#dedede;border-radius:2px;"></div>
<div style="left:1828.8px;top:386.5px;width:11px;height:11px;background:#6fc7a4;border-radius:6px;"></div>
<div style="left:1831.8px;top:389.5px;width:5px;height:5px;background:#58a78a;border-radius:3px;"></div>
<div class="inp" style="left:1849px;top:384.2px;width:44.3px;height:15.2px;"></div>
<span class="t" style="left:1853px;top:384.7px;height:16px;line-height:16px;font-size:12px;color:#5a5a5a;">A</span>
<span class="t" style="left:1866px;top:384.6px;height:16px;line-height:16px;font-size:12.5px;color:#dcdcdc;letter-spacing:-0.051px;">255</span>
<div style="left:1597.3px;top:406.5px;width:299px;height:21px;background:#2a2a2a;"></div>
<div style="left:1599.2px;top:408.6px;width:147.5px;height:19px;background:#444;border-radius:4px 4px 0 0;"></div>
<div style="left:1747.5px;top:408.6px;width:147.5px;height:19px;background:#282828;border-radius:4px 4px 0 0;"></div>
<span class="t" style="left:1648.2px;top:409.8px;height:16px;line-height:16px;font-size:12.5px;color:#dcdcdc;letter-spacing:-0.611px;">Swatches</span>
<span class="t" style="left:1793px;top:409.8px;height:16px;line-height:16px;font-size:12.5px;color:#bbb;letter-spacing:-0.175px;">Generator</span>
<div style="left:1598.4px;top:432px;width:256.3px;height:16.5px;background:#5a5a5a;border-radius:3px;"></div>
<div style="left:1598.9px;top:432.5px;width:62.5px;height:15.5px;background:#222;border-radius:3px;"></div>
<svg style="left:1605.5px;top:435px;" width="11" height="11" viewBox="0 0 11 11"><path d="M1 0.5 V10 M4 0.5 V10 M6.5 0.8 L9.8 10" stroke="#2ecc71" stroke-width="1.6" fill="none"/></svg>
<span class="t" style="left:1621.5px;top:432.6px;height:16px;line-height:16px;font-size:12.5px;color:#dcdcdc;letter-spacing:-0.244px;">Library</span>
<svg style="left:1670.5px;top:435px;" width="11" height="11" viewBox="0 0 11 11"><path d="M0.5 1.5 H4 L5 2.7 H10.5 V10 H0.5 Z" fill="none" stroke="#ddd" stroke-width="1"/><path d="M2.3 4.8 H8.7 M2.3 6.4 H8.7 M2.3 8 H8.7" stroke="#ddd" stroke-width="0.9"/></svg>
<span class="t" style="left:1686.5px;top:432.6px;height:16px;line-height:16px;font-size:12.5px;color:#dcdcdc;letter-spacing:-0.243px;">Project</span>
<svg style="left:1737.5px;top:435px;" width="9" height="11" viewBox="0 0 9 11"><path d="M0.5 0.5 H5.5 L8.5 3.5 V10.5 H0.5 Z M5.5 0.5 V3.5 H8.5" fill="none" stroke="#ddd" stroke-width="1"/></svg>
<span class="t" style="left:1752.5px;top:432.6px;height:16px;line-height:16px;font-size:12.5px;color:#dcdcdc;letter-spacing:-1.048px;">Scene</span>
<svg style="left:1800.5px;top:435px;" width="12" height="11" viewBox="0 0 12 11"><path d="M1 3 a2 2 0 0 1 2 -2 H8.5 a2 2 0 0 1 2 2 V6 L7 10 H3 a2 2 0 0 1 -2 -2 Z M10.5 6 H8 a1 1 0 0 0 -1 1 V10" fill="none" stroke="#ddd" stroke-width="1"/></svg>
<span class="t" style="left:1816.2px;top:432.6px;height:16px;line-height:16px;font-size:12.5px;color:#dcdcdc;letter-spacing:-0.672px;">Labels</span>
<div style="left:1858.7px;top:432px;width:36.1px;height:16.5px;background:#5a5a5a;border-radius:3px;"></div>
<div style="left:1859.2px;top:432.5px;width:16px;height:15.5px;background:#222;border-radius:3px;"></div>
<svg style="left:1862.5px;top:435.5px;" width="10" height="10" viewBox="0 0 10 10"><g fill="#2ecc71"><rect x="0.2" y="0.2" width="3.3" height="3.3"/><rect x="5.6" y="0.2" width="3.3" height="3.3"/><rect x="0.2" y="5.6" width="3.3" height="3.3"/><rect x="5.6" y="5.6" width="3.3" height="3.3"/></g></svg>
<svg style="left:1881px;top:435.5px;" width="10" height="10" viewBox="0 0 10 10"><path d="M0 1.2 H10 M0 4.6 H10 M0 8 H10" stroke="#ddd" stroke-width="1"/></svg>
<div style="left:1598.4px;top:453.5px;width:274.6px;height:15.5px;background:#4a4a4a;border-radius:3px;box-shadow:0 0 0 1px #5c5c5c;"></div>
<span class="t" style="left:1601.3px;top:454.0px;height:16px;line-height:16px;font-size:12.5px;color:#dcdcdc;letter-spacing:-0.339px;">Alice</span>
<svg style="left:1859.5px;top:458.2px;" width="10.4" height="6.2" viewBox="0 0 10.4 6.2"><path d="M1 1 L5.2 5.2 L9.4 1" fill="none" stroke="#ccc" stroke-width="1.0"/></svg>
<div style="left:1880.0px;top:460.3px;width:2px;height:2px;background:#ddd;"></div>
<div style="left:1884.7px;top:460.3px;width:2px;height:2px;background:#ddd;"></div>
<div style="left:1889.4px;top:460.3px;width:2px;height:2px;background:#ddd;"></div>
<div style="left:1598.4px;top:470px;width:296.4px;height:14px;background:#262626;"></div>
<div style="left:1600.0px;top:472px;width:18px;height:12px;background:#3f7fae;border-radius:3px 3px 0 0;"></div>
<div style="left:1621.95px;top:472px;width:18px;height:12px;background:#d6dcb9;border-radius:3px 3px 0 0;"></div>
<div style="left:1643.9px;top:472px;width:18px;height:12px;background:#f2bf5c;border-radius:3px 3px 0 0;"></div>
<div style="left:1665.85px;top:472px;width:18px;height:12px;background:#c3ab96;border-radius:3px 3px 0 0;"></div>
<div style="left:1687.8px;top:472px;width:18px;height:12px;background:#d9695f;border-radius:3px 3px 0 0;"></div>
<div class="tab" style="left:1593px;top:490.5px;width:37.6px;height:21.5px;"></div>
<span class="t" style="left:1598.6px;top:493.6px;height:16px;line-height:16px;font-size:12.5px;color:#dcdcdc;letter-spacing:-0.199px;">Align</span>
<div style="left:1593px;top:512px;width:321px;height:67.5px;background:#444;"></div>
<span class="t" style="left:1601.3px;top:523.8px;height:16px;line-height:16px;font-size:12.5px;color:#dcdcdc;letter-spacing:-0.242px;">Alignment</span>
<span class="t" style="left:1601.3px;top:551.8px;height:16px;line-height:16px;font-size:12.5px;color:#dcdcdc;letter-spacing:0.073px;">Distribution</span>
<div class="btn" style="left:1790.3px;top:522.4px;width:17.8px;height:17.2px;border-radius:4px 1px 1px 4px;"></div>
<svg style="left:1790.6px;top:522.6px;" width="17.2" height="16.8" viewBox="0 0 17.2 16.8"><path d="M3 2.5 V14.5" stroke="#ddd" stroke-width="1.1"/><path d="M5.5 5.8 H11 M5.5 11 H14.5" stroke="#ddd" stroke-width="1.6"/></svg>
<div class="btn" style="left:1808.1px;top:522.4px;width:17.8px;height:17.2px;border-radius:1px;"></div>
<svg style="left:1808.3999999999999px;top:522.6px;" width="17.2" height="16.8" viewBox="0 0 17.2 16.8"><path d="M8.6 2.5 V14.5" stroke="#ddd" stroke-width="1.1"/><path d="M5 5.8 H12.2 M3 11 H14.2" stroke="#ddd" stroke-width="1.6"/></svg>
<div class="btn" style="left:1825.8999999999999px;top:522.4px;width:17.8px;height:17.2px;border-radius:1px 4px 4px 1px;"></div>
<svg style="left:1826.1999999999998px;top:522.6px;" width="17.2" height="16.8" viewBox="0 0 17.2 16.8"><path d="M14.2 2.5 V14.5" stroke="#ddd" stroke-width="1.1"/><path d="M6.2 5.8 H11.7 M2.7 11 H11.7" stroke="#ddd" stroke-width="1.6"/></svg>
<div class="btn" style="left:1852.3px;top:522.4px;width:17.8px;height:17.2px;border-radius:4px 1px 1px 4px;"></div>
<svg style="left:1852.6px;top:522.6px;" width="17.2" height="16.8" viewBox="0 0 17.2 16.8"><path d="M2.5 3 H14.7" stroke="#ddd" stroke-width="1.1"/><path d="M6 5.5 V14.5 M11.2 5.5 V10" stroke="#ddd" stroke-width="1.6"/></svg>
<div class="btn" style="left:1870.1px;top:522.4px;width:17.8px;height:17.2px;border-radius:1px;"></div>
<svg style="left:1870.3999999999999px;top:522.6px;" width="17.2" height="16.8" viewBox="0 0 17.2 16.8"><path d="M2.5 8.4 H14.7" stroke="#ddd" stroke-width="1.1"/><path d="M6 3 V14 M11.2 5 V12" stroke="#ddd" stroke-width="1.6"/></svg>
<div class="btn" style="left:1887.8999999999999px;top:522.4px;width:17.8px;height:17.2px;border-radius:1px 4px 4px 1px;"></div>
<svg style="left:1888.1999999999998px;top:522.6px;" width="17.2" height="16.8" viewBox="0 0 17.2 16.8"><path d="M2.5 14 H14.7" stroke="#ddd" stroke-width="1.1"/><path d="M6 7.5 V11.5 M11.2 2.5 V11.5" stroke="#ddd" stroke-width="1.6"/></svg>
<div class="btn" style="left:1790.3px;top:550.4px;width:17.8px;height:17.2px;border-radius:4px 1px 1px 4px;"></div>
<svg style="left:1790.6px;top:550.6px;" width="17.2" height="16.8" viewBox="0 0 17.2 16.8"><path d="M3 1.5 V15.5 M14 1.5 V15.5" stroke="#ddd" stroke-width="1"/><rect x="7.4" y="4.4" width="2.2" height="8.2" fill="#ddd"/></svg>
<div class="btn" style="left:1808.1px;top:550.4px;width:17.8px;height:17.2px;border-radius:1px;"></div>
<svg style="left:1808.3999999999999px;top:550.6px;" width="17.2" height="16.8" viewBox="0 0 17.2 16.8"><path d="M2 3 H15.8 M2 14.1 H15.8" stroke="#ddd" stroke-width="1"/><rect x="5" y="7.6" width="7.8" height="2" fill="#ddd"/></svg>
<div class="btn" style="left:1825.8999999999999px;top:550.4px;width:17.8px;height:17.2px;border-radius:1px 4px 4px 1px;"></div>
<svg style="left:1826.1999999999998px;top:550.6px;" width="17.2" height="16.8" viewBox="0 0 17.2 16.8"><path d="M2.2 3.5 V1.5 H4.2 M14.4 1.5 H16.4 V3.5 M16.4 13.5 V15.5 H14.4 M4.2 15.5 H2.2 V13.5" fill="none" stroke="#ddd" stroke-width="1"/><g fill="#ddd"><rect x="4.2" y="8.5" width="1.8" height="4"/><rect x="8.3" y="6.4" width="1.8" height="4"/><rect x="12.3" y="4.4" width="1.8" height="4"/></g></svg>
<div class="tab" style="left:494px;top:586.2px;width:89px;height:21.8px;"></div>
<span class="t" style="left:499.3px;top:589.5px;height:16px;line-height:16px;font-size:12.5px;color:#dcdcdc;letter-spacing:-0.464px;">Scene Window</span>
<div style="left:583.8px;top:586.2px;width:100px;height:21.8px;background:#272727;border-radius:4px 4px 0 0;"></div>
<span class="t" style="left:589px;top:589.5px;height:16px;line-height:16px;font-size:12.5px;color:#dcdcdc;letter-spacing:-0.287px;">JavaScript Editor</span>
<div style="left:684.7px;top:586.2px;width:112px;height:21.8px;background:#272727;border-radius:4px 4px 0 0;"></div>
<span class="t" style="left:690.5px;top:589.5px;height:16px;line-height:16px;font-size:12.5px;color:#dcdcdc;letter-spacing:-0.462px;">Dependency Graph</span>
<div style="left:494px;top:608px;width:1420px;height:1.3px;background:#35c67a;"></div>
<div style="left:494px;top:609.3px;width:1420px;height:21px;background:#2b2b2b;"></div>
<span class="t" style="left:523.2px;width:400px;text-align:center;top:611.8px;height:16px;line-height:16px;font-size:12.5px;color:#aaa;letter-spacing:-0.284px;">Composition 1</span>
<svg style="left:950.5px;top:614.5px;" width="10" height="10" viewBox="0 0 10 10"><path d="M1.5 1.5 L8.5 8.5 M8.5 1.5 L1.5 8.5" stroke="#aaa" stroke-width="1"/></svg>
<div style="left:969px;top:614px;width:1px;height:11px;background:#888;"></div>
<span class="t" style="left:993.2px;width:400px;text-align:center;top:611.8px;height:16px;line-height:16px;font-size:12.5px;color:#aaa;letter-spacing:-0.277px;">Composition 2</span>
<svg style="left:1420.8px;top:614.5px;" width="10" height="10" viewBox="0 0 10 10"><path d="M1.5 1.5 L8.5 8.5 M8.5 1.5 L1.5 8.5" stroke="#aaa" stroke-width="1"/></svg>
<div style="left:1439.2px;top:610px;width:469.8px;height:20.3px;background:#444;border-radius:4px 4px 0 0;"></div>
<span class="t" style="left:1463.4px;width:400px;text-align:center;top:611.8px;height:16px;line-height:16px;font-size:12.5px;color:#dcdcdc;letter-spacing:-0.238px;">Composition 3</span>
<svg style="left:1890.8px;top:614.5px;" width="10" height="10" viewBox="0 0 10 10"><path d="M1.5 1.5 L8.5 8.5 M8.5 1.5 L1.5 8.5" stroke="#bbb" stroke-width="1"/></svg>
<div style="left:494px;top:630.3px;width:490px;height:42px;background:#444;"></div>
<div style="left:496px;top:632px;width:279.7px;height:19.7px;background:#262626;border-radius:10px;"></div>
<svg style="left:498.7px;top:635.1px;" width="14" height="14" viewBox="0 0 14 14"><circle cx="5.5" cy="5.5" r="4.7" fill="none" stroke="#ccc" stroke-width="1"/><path d="M9 9 L12.5 12.5" stroke="#ccc" stroke-width="2" stroke-linecap="round"/></svg>
<span class="t" style="left:520px;top:635.2px;height:16px;line-height:16px;font-size:12.5px;color:#8a8a8a;letter-spacing:-0.478px;">Enter a layer name</span>
<div class="btn" style="left:778.7px;top:632.6px;width:19px;height:19.2px;"></div>
<svg style="left:778.7px;top:632.6px;" width="19" height="19.2" viewBox="0 0 19 19.2"><path d="M9.5 3.2 V15.399999999999999 M3.5 9.299999999999999 H15.5" stroke="#ddd" stroke-width="1.6"/><path d="M18.5 15.7 V18.7 H15.5 Z" fill="#6fc7a4"/></svg>
<div class="btn" style="left:822.5px;top:632.6px;width:19px;height:19.2px;"></div>
<div class="btn" style="left:844.6px;top:632.6px;width:19px;height:19.2px;"></div>
<div class="btn" style="left:866.7px;top:632.6px;width:19px;height:19.2px;"></div>
<svg style="left:822.5px;top:633px;" width="19" height="19" viewBox="0 0 19 19"><circle cx="11.5" cy="7" r="3.8" fill="#ddd"/><path d="M4 13 A6.5 6.5 0 0 0 10.5 14.5 M4 9.5 A5 5 0 0 0 8.5 12.5" fill="none" stroke="#999" stroke-width="1.5"/><circle cx="8.5" cy="10.5" r="3.6" fill="#777"/></svg>
<svg style="left:844.6px;top:633px;" width="19" height="19" viewBox="0 0 19 19"><g fill="#ddd"><circle cx="5" cy="5" r="1"/><circle cx="12" cy="5" r="1"/><circle cx="5" cy="11.5" r="1"/><path d="M11.5 8.5 L12.6 11.4 L15.5 12.5 L12.6 13.6 L11.5 16.5 L10.4 13.6 L7.5 12.5 L10.4 11.4 Z"/></g><path d="M18.5 15.5 V18.5 H15.5 Z" fill="#6fc7a4"/></svg>
<svg style="left:866.7px;top:633px;" width="19" height="19" viewBox="0 0 19 19"><path d="M3 5 H7 M10.5 5 H16 M3 9.5 H10 M13.5 9.5 H16 M3 14 H6 M9.5 14 H16" stroke="#ddd" stroke-width="1"/><circle cx="8.7" cy="5" r="1.6" fill="none" stroke="#ddd" stroke-width="1"/><circle cx="11.7" cy="9.5" r="1.6" fill="none" stroke="#ddd" stroke-width="1"/><circle cx="7.7" cy="14" r="1.6" fill="none" stroke="#ddd" stroke-width="1"/><path d="M18.5 15.5 V18.5 H15.5 Z" fill="#6fc7a4"/></svg>
<div class="inp" style="left:888px;top:632.7px;width:94.2px;height:19px;"></div>
<span class="t" style="left:893px;top:635.3px;height:16px;line-height:16px;font-size:12px;color:#4a4a4a;">F</span>
<span class="t" style="left:905.7px;top:635.2px;height:16px;line-height:16px;font-size:12.5px;color:#dcdcdc;letter-spacing:0.025px;">112</span>
<svg style="left:500px;top:656px;" width="10" height="14" viewBox="0 0 10 14"><path d="M2.7 6 V4 a2.3 2.3 0 0 1 4.6 0 V6" fill="none" stroke="#ccc" stroke-width="1.3"/><rect x="1" y="6" width="8" height="6.5" rx="0.8" fill="#ccc"/><rect x="4.3" y="8" width="1.4" height="2.5" fill="#444"/></svg>
<svg style="left:517px;top:658.5px;" width="14" height="9" viewBox="0 0 14 9"><ellipse cx="7" cy="4.5" rx="6.2" ry="3.7" fill="none" stroke="#ccc" stroke-width="1"/><circle cx="7" cy="4.5" r="2" fill="#ccc" fill-opacity="0.9"/></svg>
<svg style="left:537px;top:655.5px;" width="13" height="15" viewBox="0 0 13 15"><path d="M6.5 1.5 L11.7 4.3 V10.6 L6.5 13.6 L1.3 10.6 V4.3 Z M1.3 4.3 L6.5 7.3 L11.7 4.3 M6.5 7.3 V13.6" fill="none" stroke="#ccc" stroke-width="1"/></svg>
<svg style="left:555.5px;top:657px;" width="15" height="12" viewBox="0 0 15 12"><path d="M0.5 4 H3 L6.5 1 V11 L3 8 H0.5 Z" fill="#ccc"/><path d="M8.5 3.5 A3.5 3.5 0 0 1 8.5 8.5 M10.5 1.5 A6 6 0 0 1 10.5 10.5" fill="none" stroke="#ccc" stroke-width="1.1"/></svg>
<svg style="left:574.5px;top:656px;" width="13.299999999999999" height="13.299999999999999" viewBox="0 0 14 14"><g transform="rotate(45 7 7)"><rect x="5.1" y="-1.6" width="3.8" height="5" rx="1.5" fill="#ccc"/><rect x="4" y="3.2" width="6" height="1.7" rx="0.5" fill="#ccc"/><path d="M5.9 5 V13.2 L7 15 L8.1 13.2 V5" fill="none" stroke="#ccc" stroke-width="0.9"/></g></svg>
<svg style="left:593.5px;top:658.5px;" width="14" height="9" viewBox="0 0 14 9"><path d="M0 4.5 L3.2 0.5 H13.5 V8.5 H3.2 Z" fill="#ccc"/><circle cx="4.4" cy="4.5" r="1.6" fill="#333"/></svg>
<span class="t" style="left:649.4px;top:655.8px;height:16px;line-height:16px;font-size:12.5px;color:#dcdcdc;letter-spacing:-0.685px;">Name</span>
<div style="left:494px;top:672.2px;width:477px;height:109px;background:#3a3a3a;"></div>
<div style="left:494px;top:781.2px;width:477px;height:182px;background:#2a2a2a;"></div>
<div style="left:971px;top:672.2px;width:13px;height:291px;background:#2a2a2a;"></div>
<div style="left:972.4px;top:673px;width:9.6px;height:288px;background:#4f4f4f;border-radius:5px;"></div>
<div style="left:494px;top:739px;width:477px;height:20px;background:#434a5c;"></div>
<div style="left:496px;top:674.4000000000001px;width:18px;height:17.6px;background:#2b2b2b;border-radius:3px;"></div>
<div style="left:515.3px;top:674.4000000000001px;width:17.6px;height:17.6px;background:#2b2b2b;border-radius:3px;"></div>
<svg style="left:517px;top:676.2px;" width="14" height="14" viewBox="0 0 14 14"><circle cx="7" cy="7.3" r="5" fill="none" stroke="#ddd" stroke-width="1.1"/><path d="M4.5 7.3 L6.5 9.3 L11.3 3.6" fill="none" stroke="#ddd" stroke-width="1.3"/></svg>
<div style="left:573px;top:675.2px;width:16px;height:16px;background:#c6f07f;border-radius:3px;box-shadow:0 0 0 1px #2a2a2a;"></div>
<svg style="left:593.5px;top:678.7px;" width="14" height="9" viewBox="0 0 14 9"><path d="M0 4.5 L3.2 0.5 H13.5 V8.5 H3.2 Z" fill="#ddd"/><circle cx="4.4" cy="4.5" r="1.6" fill="#333"/></svg>
<svg style="left:646px;top:678.2px;" width="18" height="10" viewBox="0 0 18 10"><path d="M0.2 5.2 Q1.8 0.6 3.3 0.9 Q4.8 1.2 6.7 8.6 Q7.2 9.6 8 8 L10.2 0.9 Q10.8 0 11.5 1.8 L13.8 8.6 Q14.5 9.6 15.3 8 L17.2 4.2" fill="none" stroke="#8fd68f" stroke-width="1.2" stroke-linejoin="round" stroke-linecap="round"/></svg>
<span class="t" style="left:667.2px;top:675.7px;height:16px;line-height:16px;font-size:12.5px;color:#dcdcdc;letter-spacing:-0.282px;">Oscillator [Position.Z] Cosine</span>
<div style="left:929.8px;top:675.5px;width:10.2px;height:15.4px;background:#2b2b2b;border-radius:4px 0 0 4px;"></div>
<div style="left:940.5999999999999px;top:675.5px;width:10.2px;height:15.4px;background:#2b2b2b;border-radius:0 4px 4px 0;"></div>
<svg style="left:929.8px;top:675.5px;" width="21" height="15.4" viewBox="0 0 21 15.4"><path d="M8.5 4.5 H5.2 L2.1999999999999993 7.7 L5.2 10.9 H8.5 Z" fill="#d8c26e"/><path d="M12.5 4.5 H15.8 L18.8 7.7 L15.8 10.9 H12.5 Z" fill="#808080"/></svg>
<svg style="left:954.6px;top:677.2px;" width="12" height="12" viewBox="0 0 12 12"><circle cx="6" cy="6" r="4.1" fill="none" stroke="#888" stroke-width="1"/></svg>
<div style="left:496px;top:696.4000000000001px;width:18px;height:17.6px;background:#2b2b2b;border-radius:3px;"></div>
<div style="left:515.3px;top:696.4000000000001px;width:17.6px;height:17.6px;background:#2b2b2b;border-radius:3px;"></div>
<svg style="left:517px;top:698.2px;" width="14" height="14" viewBox="0 0 14 14"><circle cx="7" cy="7.3" r="5" fill="none" stroke="#ddd" stroke-width="1.1"/><path d="M4.5 7.3 L6.5 9.3 L11.3 3.6" fill="none" stroke="#ddd" stroke-width="1.3"/></svg>
<div style="left:573px;top:697.2px;width:16px;height:16px;background:#c6f07f;border-radius:3px;box-shadow:0 0 0 1px #2a2a2a;"></div>
<svg style="left:593.5px;top:700.7px;" width="14" height="9" viewBox="0 0 14 9"><path d="M0 4.5 L3.2 0.5 H13.5 V8.5 H3.2 Z" fill="#ddd"/><circle cx="4.4" cy="4.5" r="1.6" fill="#333"/></svg>
<svg style="left:646px;top:700.2px;" width="18" height="10" viewBox="0 0 18 10"><path d="M0.2 5.2 Q1.8 0.6 3.3 0.9 Q4.8 1.2 6.7 8.6 Q7.2 9.6 8 8 L10.2 0.9 Q10.8 0 11.5 1.8 L13.8 8.6 Q14.5 9.6 15.3 8 L17.2 4.2" fill="none" stroke="#8fd68f" stroke-width="1.2" stroke-linejoin="round" stroke-linecap="round"/></svg>
<span class="t" style="left:667.2px;top:697.7px;height:16px;line-height:16px;font-size:12.5px;color:#dcdcdc;letter-spacing:-0.265px;">Oscillator [Position.X] Sine Driver</span>
<div style="left:929.8px;top:697.5px;width:10.2px;height:15.4px;background:#2b2b2b;border-radius:4px 0 0 4px;"></div>
<div style="left:940.5999999999999px;top:697.5px;width:10.2px;height:15.4px;background:#2b2b2b;border-radius:0 4px 4px 0;"></div>
<svg style="left:929.8px;top:697.5px;" width="21" height="15.4" viewBox="0 0 21 15.4"><path d="M8.5 4.5 H5.2 L2.1999999999999993 7.7 L5.2 10.9 H8.5 Z" fill="#d8c26e"/><path d="M12.5 4.5 H15.8 L18.8 7.7 L15.8 10.9 H12.5 Z" fill="#cf5cf0"/></svg>
<svg style="left:954.6px;top:699.2px;" width="12" height="12" viewBox="0 0 12 12"><circle cx="6" cy="6" r="4.1" fill="none" stroke="#888" stroke-width="1"/></svg>
<div style="left:496px;top:718.5px;width:18px;height:17.6px;background:#2b2b2b;border-radius:3px;"></div>
<div style="left:515.3px;top:718.5px;width:17.6px;height:17.6px;background:#2b2b2b;border-radius:3px;"></div>
<svg style="left:517px;top:722.8px;" width="14" height="9" viewBox="0 0 14 9"><ellipse cx="7" cy="4.5" rx="6.2" ry="3.7" fill="none" stroke="#ccc" stroke-width="1"/><circle cx="7" cy="4.5" r="2" fill="#ccc" fill-opacity="0.9"/></svg>
<div style="left:534.4px;top:718.5px;width:17.6px;height:17.6px;background:#2b2b2b;border-radius:3px;"></div>
<div style="left:573px;top:719.3px;width:16px;height:16px;background:#ffe680;border-radius:3px;box-shadow:0 0 0 1px #2a2a2a;"></div>
<svg style="left:593.5px;top:722.8px;" width="14" height="9" viewBox="0 0 14 9"><path d="M0 4.5 L3.2 0.5 H13.5 V8.5 H3.2 Z" fill="#ddd"/><circle cx="4.4" cy="4.5" r="1.6" fill="#333"/></svg>
<div style="left:610.5px;top:718.5px;width:31px;height:17.6px;background:#343434;border-radius:3px;"></div>
<svg style="left:613.5px;top:724.55px;" width="9" height="5.5" viewBox="0 0 9 5.5"><path d="M1 1 L4.5 4.5 L8 1" fill="none" stroke="#999" stroke-width="1"/></svg>
<svg style="left:649px;top:720.8px;" width="13" height="13" viewBox="0 0 13 13"><rect x="0.5" y="0.5" width="12" height="12" fill="none" stroke="#e3d46f" stroke-width="1" stroke-dasharray="4 2.5" stroke-dashoffset="2"/><g fill="#ddd"><rect x="0" y="0" width="1.5" height="1.5"/><rect x="11.5" y="0" width="1.5" height="1.5"/><rect x="0" y="11.5" width="1.5" height="1.5"/><rect x="11.5" y="11.5" width="1.5" height="1.5"/></g></svg>
<span class="t" style="left:667.2px;top:719.8px;height:16px;line-height:16px;font-size:12.5px;color:#dcdcdc;letter-spacing:-0.649px;">Ellipse Shape</span>
<svg style="left:954.6px;top:721.3px;" width="12" height="12" viewBox="0 0 12 12"><circle cx="6" cy="6" r="4.1" fill="none" stroke="#888" stroke-width="1"/></svg>
<div style="left:496px;top:740.5px;width:18px;height:17.6px;background:#2b2b2b;border-radius:3px;"></div>
<div style="left:515.3px;top:740.5px;width:17.6px;height:17.6px;background:#2b2b2b;border-radius:3px;"></div>
<svg style="left:517px;top:742.3px;" width="14" height="14" viewBox="0 0 14 14"><circle cx="7" cy="7.3" r="5" fill="none" stroke="#ddd" stroke-width="1.1"/><path d="M4.5 7.3 L6.5 9.3 L11.3 3.6" fill="none" stroke="#ddd" stroke-width="1.3"/></svg>
<div style="left:573px;top:741.3px;width:16px;height:16px;background:#6495ed;border-radius:3px;box-shadow:0 0 0 1px #2a2a2a;"></div>
<svg style="left:593.5px;top:744.8px;" width="14" height="9" viewBox="0 0 14 9"><path d="M0 4.5 L3.2 0.5 H13.5 V8.5 H3.2 Z" fill="#ddd"/><circle cx="4.4" cy="4.5" r="1.6" fill="#333"/></svg>
<svg style="left:666.6px;top:743.8px;" width="15" height="11" viewBox="0 0 15 11"><text x="0" y="7" font-size="8.5" fill="#cfe0ff" font-family="Liberation Sans, sans-serif" textLength="14.5" lengthAdjust="spacingAndGlyphs">abc</text><path d="M0 9.6 H4 M5.3 9.6 H9.3 M10.6 9.6 H14.5" stroke="#cfe0ff" stroke-width="1"/><path d="M0 2.6 H14.5" stroke="#cfe0ff" stroke-width="0.8"/></svg>
<span class="t" style="left:686px;top:741.8px;height:16px;line-height:16px;font-size:12.5px;color:#dcdcdc;letter-spacing:-0.243px;">String Generator [String]</span>
<div style="left:929.8px;top:741.5999999999999px;width:10.2px;height:15.4px;background:#2b2b2b;border-radius:4px 0 0 4px;"></div>
<div style="left:940.5999999999999px;top:741.5999999999999px;width:10.2px;height:15.4px;background:#2b2b2b;border-radius:0 4px 4px 0;"></div>
<svg style="left:929.8px;top:741.5999999999999px;" width="21" height="15.4" viewBox="0 0 21 15.4"><path d="M8.5 4.5 H5.2 L2.1999999999999993 7.7 L5.2 10.9 H8.5 Z" fill="#808080"/><path d="M12.5 4.5 H15.8 L18.8 7.7 L15.8 10.9 H12.5 Z" fill="#cf5cf0"/></svg>
<svg style="left:954.6px;top:743.3px;" width="12" height="12" viewBox="0 0 12 12"><circle cx="6" cy="6" r="4.1" fill="none" stroke="#888" stroke-width="1"/></svg>
<div style="left:496px;top:762.5px;width:18px;height:17.6px;background:#2b2b2b;border-radius:3px;"></div>
<div style="left:515.3px;top:762.5px;width:17.6px;height:17.6px;background:#2b2b2b;border-radius:3px;"></div>
<svg style="left:517px;top:766.8px;" width="14" height="9" viewBox="0 0 14 9"><ellipse cx="7" cy="4.5" rx="6.2" ry="3.7" fill="none" stroke="#ccc" stroke-width="1"/><circle cx="7" cy="4.5" r="2" fill="#ccc" fill-opacity="0.9"/></svg>
<div style="left:534.4px;top:762.5px;width:17.6px;height:17.6px;background:#2b2b2b;border-radius:3px;"></div>
<div style="left:573px;top:763.3px;width:16px;height:16px;background:#bb8ffa;border-radius:3px;box-shadow:0 0 0 1px #2a2a2a;"></div>
<svg style="left:593.5px;top:766.8px;" width="14" height="9" viewBox="0 0 14 9"><path d="M0 4.5 L3.2 0.5 H13.5 V8.5 H3.2 Z" fill="#ddd"/><circle cx="4.4" cy="4.5" r="1.6" fill="#333"/></svg>
<svg style="left:666px;top:763.3px;" width="16" height="16" viewBox="0 0 16 16"><rect x="1" y="1" width="14" height="14" fill="none" stroke="#ddd" stroke-width="0.9"/><g fill="#eee"><rect x="0" y="0" width="2.2" height="2.2"/><rect x="13.8" y="0" width="2.2" height="2.2"/><rect x="0" y="13.8" width="2.2" height="2.2"/><rect x="13.8" y="13.8" width="2.2" height="2.2"/></g><path d="M4.3 4 H11.7 V5.9 H9 V12.3 H7 V5.9 H4.3 Z" fill="#e3d46f"/></svg>
<span class="t" style="left:686px;top:763.8px;height:16px;line-height:16px;font-size:12.5px;color:#dcdcdc;letter-spacing:-0.338px;">Cavalry</span>
<div style="left:929.8px;top:763.5999999999999px;width:10.2px;height:15.4px;background:#2b2b2b;border-radius:4px 0 0 4px;"></div>
<div style="left:940.5999999999999px;top:763.5999999999999px;width:10.2px;height:15.4px;background:#2b2b2b;border-radius:0 4px 4px 0;"></div>
<svg style="left:929.8px;top:763.5999999999999px;" width="21" height="15.4" viewBox="0 0 21 15.4"><path d="M8.5 4.5 H5.2 L2.1999999999999993 7.7 L5.2 10.9 H8.5 Z" fill="#d8c26e"/><path d="M12.5 4.5 H15.8 L18.8 7.7 L15.8 10.9 H12.5 Z" fill="#808080"/></svg>
<div style="left:929.8px;top:763.5999999999999px;width:10.2px;height:15.4px;border:1px solid #a39258;"></div>
<svg style="left:954.6px;top:765.3px;" width="12" height="12" viewBox="0 0 12 12"><circle cx="6" cy="6" r="4.1" fill="none" stroke="#888" stroke-width="1"/></svg>
<div style="left:652px;top:734.2px;width:322.7px;height:29.6px;border:3.2px solid #a8dc1c;"></div>
<div style="left:494px;top:963px;width:490px;height:13px;background:#2b2b2b;"></div>
<div style="left:495.3px;top:964px;width:474px;height:9.7px;background:#505050;border-radius:5px;"></div>
<div style="left:494px;top:976px;width:490px;height:21px;background:#444;"></div>
<div class="btn" style="left:497.4px;top:978px;width:19.2px;height:18.3px;"></div>
<svg style="left:500px;top:982.7px;" width="14" height="9" viewBox="0 0 14 9"><path d="M0 4.5 L3.2 0.5 H13.5 V8.5 H3.2 Z" fill="#ddd"/><circle cx="4.4" cy="4.5" r="1.6" fill="#333"/></svg>
<span class="t" style="left:520.5px;top:979.8px;height:16px;line-height:16px;font-size:12.5px;color:#dcdcdc;letter-spacing:-0.458px;">1 selected</span>
<div class="btn" style="left:775.5px;top:978px;width:18.6px;height:18.3px;"></div>
<svg style="left:775.5px;top:978px;" width="18.6" height="18.3" viewBox="0 0 18.6 18.3"><rect x="4" y="4" width="10.5" height="10.5" fill="none" stroke="#ddd" stroke-width="1"/><rect x="7.8" y="7.8" width="3" height="3" fill="#ddd"/></svg>
<div style="left:798.1px;top:979px;width:182.7px;height:16.8px;background:#5a5a5a;border-radius:3px;"></div>
<div style="left:798.6px;top:979.5px;width:86.5px;height:15.8px;background:#222;border-radius:3px;"></div>
<svg style="left:805px;top:982px;" width="12" height="12" viewBox="0 0 12 12"><path d="M0.5 1.5 H11.5 M2.5 5.8 H9.5 M0.5 10 H11" stroke="#2ecc71" stroke-width="1.8"/></svg>
<span class="t" style="left:821.2px;top:979.6px;height:16px;line-height:16px;font-size:12.5px;color:#dcdcdc;letter-spacing:-0.258px;">Time Editor</span>
<svg style="left:893px;top:981px;" width="13" height="13" viewBox="0 0 13 13"><path d="M1.5 0.5 V11.5 H12.5" fill="none" stroke="#ddd" stroke-width="1"/><path d="M2 10.5 L11 3" stroke="#ddd" stroke-width="1"/></svg>
<span class="t" style="left:909.7px;top:979.6px;height:16px;line-height:16px;font-size:12.5px;color:#dcdcdc;letter-spacing:-0.264px;">Graph Editor</span>
<div style="left:984px;top:630.3px;width:6px;height:367px;background:#1c1c1c;"></div>
<div style="left:982px;top:672.2px;width:6px;height:291px;background:#2a2a2a;"></div>
<div style="left:988px;top:672.2px;width:12px;height:291px;background:#1c1c1c;"></div>
<div style="left:986.2px;top:807px;width:1.8px;height:1.8px;background:#8a8a8a;"></div>
<div style="left:986.2px;top:810px;width:1.8px;height:1.8px;background:#8a8a8a;"></div>
<div style="left:986.2px;top:813px;width:1.8px;height:1.8px;background:#8a8a8a;"></div>
<div style="left:986.2px;top:816px;width:1.8px;height:1.8px;background:#8a8a8a;"></div>
<div style="left:986.2px;top:819px;width:1.8px;height:1.8px;background:#8a8a8a;"></div>
<div style="left:986.2px;top:822px;width:1.8px;height:1.8px;background:#8a8a8a;"></div>
<div style="left:990px;top:630.3px;width:924px;height:42px;background:#222;"></div>
<div style="left:1000px;top:672.2px;width:914px;height:291px;background:#2a2a2a;"></div>
<div style="left:1905px;top:672.2px;width:8px;height:291px;background:#222;"></div>
<svg style="left:990px;top:630px;" width="923" height="24" viewBox="0 0 923 24"><path d="M10.00 16.3 V24.2" stroke="#9a9a9a" stroke-width="1"/><path d="M20.87 20 V24.2" stroke="#8a8a8a" stroke-width="1"/><path d="M31.73 20 V24.2" stroke="#8a8a8a" stroke-width="1"/><path d="M42.60 20 V24.2" stroke="#8a8a8a" stroke-width="1"/><path d="M53.46 20 V24.2" stroke="#8a8a8a" stroke-width="1"/><path d="M64.33 16.3 V24.2" stroke="#9a9a9a" stroke-width="1"/><path d="M75.20 20 V24.2" stroke="#8a8a8a" stroke-width="1"/><path d="M86.06 20 V24.2" stroke="#8a8a8a" stroke-width="1"/><path d="M96.93 20 V24.2" stroke="#8a8a8a" stroke-width="1"/><path d="M107.79 20 V24.2" stroke="#8a8a8a" stroke-width="1"/><path d="M118.66 16.3 V24.2" stroke="#9a9a9a" stroke-width="1"/><path d="M129.53 20 V24.2" stroke="#8a8a8a" stroke-width="1"/><path d="M140.39 20 V24.2" stroke="#8a8a8a" stroke-width="1"/><path d="M151.26 20 V24.2" stroke="#8a8a8a" stroke-width="1"/><path d="M162.12 20 V24.2" stroke="#8a8a8a" stroke-width="1"/><path d="M172.99 16.3 V24.2" stroke="#9a9a9a" stroke-width="1"/><path d="M183.86 20 V24.2" stroke="#8a8a8a" stroke-width="1"/><path d="M194.72 20 V24.2" stroke="#8a8a8a" stroke-width="1"/><path d="M205.59 20 V24.2" stroke="#8a8a8a" stroke-width="1"/><path d="M216.45 20 V24.2" stroke="#8a8a8a" stroke-width="1"/><path d="M227.32 16.3 V24.2" stroke="#9a9a9a" stroke-width="1"/><path d="M238.19 20 V24.2" stroke="#8a8a8a" stroke-width="1"/><path d="M249.05 20 V24.2" stroke="#8a8a8a" stroke-width="1"/><path d="M259.92 20 V24.2" stroke="#8a8a8a" stroke-width="1"/><path d="M270.78 20 V24.2" stroke="#8a8a8a" stroke-width="1"/><path d="M281.65 16.3 V24.2" stroke="#9a9a9a" stroke-width="1"/><path d="M292.52 20 V24.2" stroke="#8a8a8a" stroke-width="1"/><path d="M303.38 20 V24.2" stroke="#8a8a8a" stroke-width="1"/><path d="M314.25 20 V24.2" stroke="#8a8a8a" stroke-width="1"/><path d="M325.11 20 V24.2" stroke="#8a8a8a" stroke-width="1"/><path d="M335.98 16.3 V24.2" stroke="#9a9a9a" stroke-width="1"/><path d="M346.85 20 V24.2" stroke="#8a8a8a" stroke-width="1"/><path d="M357.71 20 V24.2" stroke="#8a8a8a" stroke-width="1"/><path d="M368.58 20 V24.2" stroke="#8a8a8a" stroke-width="1"/><path d="M379.44 20 V24.2" stroke="#8a8a8a" stroke-width="1"/><path d="M390.31 16.3 V24.2" stroke="#9a9a9a" stroke-width="1"/><path d="M401.18 20 V24.2" stroke="#8a8a8a" stroke-width="1"/><path d="M412.04 20 V24.2" stroke="#8a8a8a" stroke-width="1"/><path d="M422.91 20 V24.2" stroke="#8a8a8a" stroke-width="1"/><path d="M433.77 20 V24.2" stroke="#8a8a8a" stroke-width="1"/><path d="M444.64 16.3 V24.2" stroke="#9a9a9a" stroke-width="1"/><path d="M455.51 20 V24.2" stroke="#8a8a8a" stroke-width="1"/><path d="M466.37 20 V24.2" stroke="#8a8a8a" stroke-width="1"/><path d="M477.24 20 V24.2" stroke="#8a8a8a" stroke-width="1"/><path d="M488.10 20 V24.2" stroke="#8a8a8a" stroke-width="1"/><path d="M498.97 16.3 V24.2" stroke="#9a9a9a" stroke-width="1"/><path d="M509.84 20 V24.2" stroke="#8a8a8a" stroke-width="1"/><path d="M520.70 20 V24.2" stroke="#8a8a8a" stroke-width="1"/><path d="M531.57 20 V24.2" stroke="#8a8a8a" stroke-width="1"/><path d="M542.43 20 V24.2" stroke="#8a8a8a" stroke-width="1"/><path d="M553.30 16.3 V24.2" stroke="#9a9a9a" stroke-width="1"/><path d="M564.17 20 V24.2" stroke="#8a8a8a" stroke-width="1"/><path d="M575.03 20 V24.2" stroke="#8a8a8a" stroke-width="1"/><path d="M585.90 20 V24.2" stroke="#8a8a8a" stroke-width="1"/><path d="M596.76 20 V24.2" stroke="#8a8a8a" stroke-width="1"/><path d="M607.63 16.3 V24.2" stroke="#9a9a9a" stroke-width="1"/><path d="M618.50 20 V24.2" stroke="#8a8a8a" stroke-width="1"/><path d="M629.36 20 V24.2" stroke="#8a8a8a" stroke-width="1"/><path d="M640.23 20 V24.2" stroke="#8a8a8a" stroke-width="1"/><path d="M651.09 20 V24.2" stroke="#8a8a8a" stroke-width="1"/><path d="M661.96 16.3 V24.2" stroke="#9a9a9a" stroke-width="1"/><path d="M672.83 20 V24.2" stroke="#8a8a8a" stroke-width="1"/><path d="M683.69 20 V24.2" stroke="#8a8a8a" stroke-width="1"/><path d="M694.56 20 V24.2" stroke="#8a8a8a" stroke-width="1"/><path d="M705.42 20 V24.2" stroke="#8a8a8a" stroke-width="1"/><path d="M716.29 16.3 V24.2" stroke="#9a9a9a" stroke-width="1"/><path d="M727.16 20 V24.2" stroke="#8a8a8a" stroke-width="1"/><path d="M738.02 20 V24.2" stroke="#8a8a8a" stroke-width="1"/><path d="M748.89 20 V24.2" stroke="#8a8a8a" stroke-width="1"/><path d="M759.75 20 V24.2" stroke="#8a8a8a" stroke-width="1"/><path d="M770.62 16.3 V24.2" stroke="#9a9a9a" stroke-width="1"/><path d="M781.49 20 V24.2" stroke="#8a8a8a" stroke-width="1"/><path d="M792.35 20 V24.2" stroke="#8a8a8a" stroke-width="1"/><path d="M803.22 20 V24.2" stroke="#8a8a8a" stroke-width="1"/><path d="M814.08 20 V24.2" stroke="#8a8a8a" stroke-width="1"/><path d="M824.95 16.3 V24.2" stroke="#9a9a9a" stroke-width="1"/><path d="M835.82 20 V24.2" stroke="#8a8a8a" stroke-width="1"/><path d="M846.68 20 V24.2" stroke="#8a8a8a" stroke-width="1"/><path d="M857.55 20 V24.2" stroke="#8a8a8a" stroke-width="1"/><path d="M868.41 20 V24.2" stroke="#8a8a8a" stroke-width="1"/><path d="M879.28 16.3 V24.2" stroke="#9a9a9a" stroke-width="1"/><path d="M890.15 20 V24.2" stroke="#8a8a8a" stroke-width="1"/><path d="M901.01 20 V24.2" stroke="#8a8a8a" stroke-width="1"/><path d="M911.88 20 V24.2" stroke="#8a8a8a" stroke-width="1"/></svg>
<span class="t" style="left:798.3px;width:400px;text-align:center;top:630.8px;height:16px;line-height:16px;font-size:12.5px;color:#cfcfcf;letter-spacing:-0.3px;">0</span>
<span class="t" style="left:853.53px;width:400px;text-align:center;top:630.8px;height:16px;line-height:16px;font-size:12.5px;color:#cfcfcf;letter-spacing:-0.3px;">15</span>
<span class="t" style="left:907.8600000000001px;width:400px;text-align:center;top:630.8px;height:16px;line-height:16px;font-size:12.5px;color:#cfcfcf;letter-spacing:-0.3px;">30</span>
<span class="t" style="left:962.19px;width:400px;text-align:center;top:630.8px;height:16px;line-height:16px;font-size:12.5px;color:#cfcfcf;letter-spacing:-0.3px;">45</span>
<span class="t" style="left:1016.52px;width:400px;text-align:center;top:630.8px;height:16px;line-height:16px;font-size:12.5px;color:#cfcfcf;letter-spacing:-0.3px;">60</span>
<span class="t" style="left:1070.8500000000001px;width:400px;text-align:center;top:630.8px;height:16px;line-height:16px;font-size:12.5px;color:#cfcfcf;letter-spacing:-0.3px;">75</span>
<span class="t" style="left:1125.18px;width:400px;text-align:center;top:630.8px;height:16px;line-height:16px;font-size:12.5px;color:#cfcfcf;letter-spacing:-0.3px;">90</span>
<span class="t" style="left:1180.11px;width:400px;text-align:center;top:630.8px;height:16px;line-height:16px;font-size:12.5px;color:#cfcfcf;letter-spacing:-0.3px;">105</span>
<span class="t" style="left:1234.4399999999998px;width:400px;text-align:center;top:630.8px;height:16px;line-height:16px;font-size:12.5px;color:#cfcfcf;letter-spacing:-0.3px;">120</span>
<span class="t" style="left:1288.77px;width:400px;text-align:center;top:630.8px;height:16px;line-height:16px;font-size:12.5px;color:#cfcfcf;letter-spacing:-0.3px;">135</span>
<span class="t" style="left:1343.1px;width:400px;text-align:center;top:630.8px;height:16px;line-height:16px;font-size:12.5px;color:#cfcfcf;letter-spacing:-0.3px;">150</span>
<span class="t" style="left:1397.43px;width:400px;text-align:center;top:630.8px;height:16px;line-height:16px;font-size:12.5px;color:#cfcfcf;letter-spacing:-0.3px;">165</span>
<span class="t" style="left:1451.76px;width:400px;text-align:center;top:630.8px;height:16px;line-height:16px;font-size:12.5px;color:#cfcfcf;letter-spacing:-0.3px;">180</span>
<span class="t" style="left:1506.09px;width:400px;text-align:center;top:630.8px;height:16px;line-height:16px;font-size:12.5px;color:#cfcfcf;letter-spacing:-0.3px;">195</span>
<span class="t" style="left:1560.4199999999998px;width:400px;text-align:center;top:630.8px;height:16px;line-height:16px;font-size:12.5px;color:#cfcfcf;letter-spacing:-0.3px;">210</span>
<span class="t" style="left:1614.7499999999998px;width:400px;text-align:center;top:630.8px;height:16px;line-height:16px;font-size:12.5px;color:#cfcfcf;letter-spacing:-0.3px;">225</span>
<span class="t" style="left:1669.08px;width:400px;text-align:center;top:630.8px;height:16px;line-height:16px;font-size:12.5px;color:#cfcfcf;letter-spacing:-0.3px;">240</span>
<div style="left:1000px;top:655px;width:905px;height:15.5px;background:#464646;"></div>
<div style="left:995px;top:653px;width:5px;height:17.8px;background:#6fc7a4;border-radius:1px;"></div>
<div style="left:1905px;top:653px;width:5px;height:17.8px;background:#6fc7a4;border-radius:1px;"></div>
<div style="left:1000px;top:674.3px;width:905px;height:17.5px;border-radius:2px;background:repeating-linear-gradient(135deg,#dcfa92 0,#dcfa92 1.1px,#c9ef80 1.4px,#c9ef80 12.5px,#dcfa92 12.8px,#dcfa92 13.8px,#b8dd6f 14.1px,#b8dd6f 25.2px,#dcfa92 25.45px);"></div>
<div style="left:1000px;top:696.3px;width:905px;height:17.5px;border-radius:2px;background:repeating-linear-gradient(135deg,#dcfa92 0,#dcfa92 1.1px,#c9ef80 1.4px,#c9ef80 12.5px,#dcfa92 12.8px,#dcfa92 13.8px,#b8dd6f 14.1px,#b8dd6f 25.2px,#dcfa92 25.45px);"></div>
<div style="left:1000px;top:718.3px;width:905px;height:17.5px;background:#ffe880;border-radius:3px;"></div>
<div style="left:1000px;top:740.3px;width:905px;height:17.8px;background:conic-gradient(rgba(30,60,150,.4) 25%,rgba(160,220,255,.3) 0 50%,rgba(30,60,150,.4) 0 75%,rgba(160,220,255,.3) 0) 0 0/2px 2px,repeating-linear-gradient(135deg,#80b2ff 0,#80b2ff 12.7px,#6c9af2 12.7px,#6c9af2 25.4px);border:1px solid #f0f0f0;"></div>
<div style="left:1000px;top:762px;width:905px;height:17.5px;background:#b794ff;border-radius:3px;"></div>
<span class="t" style="left:1008px;top:675.2px;height:16px;line-height:16px;font-size:12.5px;color:#222;letter-spacing:-0.266px;">Oscillator [Position.Z] Cosine</span>
<span class="t" style="left:1008px;top:697.2px;height:16px;line-height:16px;font-size:12.5px;color:#222;letter-spacing:-0.239px;">Oscillator [Position.X] Sine Driver</span>
<span class="t" style="left:1008px;top:719.2px;height:16px;line-height:16px;font-size:12.5px;color:#1a1a1a;letter-spacing:-0.634px;">Ellipse Shape</span>
<span class="t" style="left:1008px;top:741.3px;height:16px;line-height:16px;font-size:12.5px;color:#fff;letter-spacing:-0.219px;">String Generator [String]</span>
<span class="t" style="left:1008px;top:763.0px;height:16px;line-height:16px;font-size:12.5px;color:#fff;letter-spacing:-0.338px;">Cavalry</span>
<div style="left:1405.2px;top:653px;width:1px;height:309px;background:#6fc7a4;"></div>
<svg style="left:1398px;top:643.7px;" width="15.4" height="10" viewBox="0 0 15.4 10"><path d="M0 0 H15.4 L7.7 9.5 Z" fill="#6fc7a4"/></svg>
<div style="left:990px;top:963px;width:924px;height:13px;background:#2b2b2b;"></div>
<div style="left:992.2px;top:964.5px;width:920.8px;height:9.3px;background:#505050;border-radius:5px;"></div>
<div style="left:990px;top:976.2px;width:924px;height:21.3px;background:#444;"></div>
<div class="btn" style="left:994.7px;top:978.4px;width:16.5px;height:17.2px;"></div>
<svg style="left:994.7px;top:978.4px;" width="16.5" height="17.2" viewBox="0 0 16.5 17.2"><path d="M2 3.5 H14.5 M2 8 H14.5" stroke="#ddd" stroke-width="1.3"/><path d="M2 12.5 H5 M7 12.5 H9" stroke="#ddd" stroke-width="1.6"/><path d="M16 13.7 V16.7 H13 Z" fill="#6fc7a4"/></svg>
<div style="left:1015px;top:979.2px;width:149.8px;height:15.8px;background:#2b2b2b;border-radius:3px;"></div>
<span class="t" style="left:1017.2px;top:980.0px;height:16px;line-height:16px;font-size:12.5px;color:#dcdcdc;letter-spacing:-0.341px;">Default Keyframe Layer</span>
<div style="left:1171px;top:979.2px;width:69.7px;height:15.8px;background:#2b2b2b;border-radius:3px;"></div>
<span class="t" style="left:1175.8px;top:979.5px;height:16px;line-height:16px;font-size:12px;color:#4a4a4a;">F</span>
<span class="t" style="left:1188px;top:979.0px;height:16px;line-height:16px;font-size:12.5px;color:#dcdcdc;">-</span>
<span class="t" style="left:1247.3px;top:979.6px;height:16px;line-height:16px;font-size:12.5px;color:#dcdcdc;letter-spacing:-0.261px;">Align:</span>
<div style="left:1283.5px;top:978.3px;width:17.2px;height:17.5px;background:#2b2b2b;border-radius:4px 0 0 4px;box-shadow:inset 0 1px 0 #4a4a4a;"></div>
<svg style="left:1283.5px;top:978.3px;" width="17.2" height="17.5" viewBox="0 0 17.2 17.5"><rect x="2.3" y="1.4" width="1" height="14.4" fill="#ddd"/><rect x="5" y="4.7" width="2.0999999999999996" height="2" fill="#6fc7a4"/><rect x="8.3" y="4.7" width="3.0999999999999996" height="2" fill="#ddd"/><rect x="5" y="10.8" width="2.0999999999999996" height="2" fill="#6fc7a4"/><rect x="8.1" y="10.8" width="6.9" height="2" fill="#ddd"/></svg>
<div style="left:1301.15px;top:978.3px;width:17.2px;height:17.5px;background:#2b2b2b;border-radius:0;box-shadow:inset 0 1px 0 #4a4a4a;"></div>
<svg style="left:1301.15px;top:978.3px;" width="17.2" height="17.5" viewBox="0 0 17.2 17.5"><rect x="8.8" y="1.4" width="1" height="14.4" fill="#ddd"/><rect x="5.7" y="4.7" width="1.5999999999999996" height="2" fill="#ddd"/><rect x="7.8" y="4.7" width="3.000000000000001" height="2" fill="#6fc7a4"/><rect x="11.3" y="4.7" width="1.5" height="2" fill="#ddd"/><rect x="3.7" y="10.8" width="3.5999999999999996" height="2" fill="#ddd"/><rect x="7.8" y="10.8" width="3.000000000000001" height="2" fill="#6fc7a4"/><rect x="11.3" y="10.8" width="3.3999999999999986" height="2" fill="#ddd"/></svg>
<div style="left:1318.8px;top:978.3px;width:17.2px;height:17.5px;background:#2b2b2b;border-radius:0 4px 4px 0;box-shadow:inset 0 1px 0 #4a4a4a;"></div>
<svg style="left:1318.8px;top:978.3px;" width="17.2" height="17.5" viewBox="0 0 17.2 17.5"><rect x="14.2" y="1.4" width="1" height="14.4" fill="#ddd"/><rect x="6.6" y="4.7" width="2.5999999999999996" height="2" fill="#ddd"/><rect x="10.2" y="4.7" width="2.0" height="2" fill="#6fc7a4"/><rect x="2.6" y="10.8" width="6.6" height="2" fill="#ddd"/><rect x="10.2" y="10.8" width="2.0" height="2" fill="#6fc7a4"/></svg>
<div style="left:1340.5px;top:978.1px;width:16.6px;height:17.6px;background:#464646;border-radius:4px;border:1px solid #272727;box-shadow:inset 0 1px 0 #5a5a5a;"></div>
<svg style="left:1340.5px;top:978.1px;" width="16.6" height="17.6" viewBox="0 0 16.6 17.6"><rect x="3" y="3.2" width="10.6" height="10.6" fill="none" stroke="#8a8a8a" stroke-width="0.9"/><rect x="7.3" y="7.5" width="2" height="2" fill="#ddd"/><g fill="#9a9a9a"><rect x="1.9" y="2.1" width="2.3" height="2.3"/><rect x="12.4" y="2.1" width="2.3" height="2.3"/><rect x="1.9" y="12.6" width="2.3" height="2.3"/><rect x="12.4" y="12.6" width="2.3" height="2.3"/></g></svg>
<div style="left:1361.7px;top:976.8px;width:18px;height:18.8px;background:#464646;border-radius:4px 0 0 4px;border:1px solid #272727;box-shadow:inset 0 1px 0 #5a5a5a;"></div>
<svg style="left:1362px;top:977.6px;" width="17.5" height="17.5" viewBox="0 0 17.5 17.5"><g transform="translate(9.2 9.2) rotate(38)"><path d="M-4 2.2 V0 A4 4 0 0 1 4 0 V4.6" fill="none" stroke="#ddd" stroke-width="2.2"/></g></svg>
<div style="left:1379.5px;top:976.8px;width:12.6px;height:18.8px;background:#2b2b2b;border-radius:0 4px 4px 0;border:1px solid #272727;border-left:1px solid #3a3a3a;box-shadow:inset 0 1px 0 #484848;"></div>
<svg style="left:1379.5px;top:976.8px;" width="12.6" height="18.8" viewBox="0 0 12.6 18.8"><path d="M3.5 6.4 L8.5 9.4 L3.5 12.4 Z" fill="none" stroke="#999" stroke-width="0.9"/></svg>
<div style="left:1396.4px;top:977.6px;width:18.6px;height:18.8px;background:#464646;border-radius:4px 0 0 4px;border:1px solid #272727;box-shadow:inset 0 1px 0 #5a5a5a;"></div>
<svg style="left:1396.5px;top:978.2px;" width="18" height="17.5" viewBox="0 0 18 17.5"><path d="M2 8.8 H4.5 M13.5 8.8 H16 M6.2 4.5 V13 M9 2.5 V15 M11.8 6 V11.5" stroke="#ddd" stroke-width="1"/></svg>
<div style="left:1414.8px;top:977.6px;width:12.3px;height:18.8px;background:#2b2b2b;border-radius:0 4px 4px 0;border:1px solid #272727;border-left:1px solid #3a3a3a;box-shadow:inset 0 1px 0 #484848;"></div>
<svg style="left:1414.8px;top:977.6px;" width="12.3" height="18.8" viewBox="0 0 12.3 18.8"><path d="M3.5 6.4 L8.5 9.4 L3.5 12.4 Z" fill="none" stroke="#999" stroke-width="0.9"/></svg>
<svg style="left:1743px;top:980px;" width="14" height="14" viewBox="0 0 14 14"><circle cx="6" cy="6" r="5" fill="none" stroke="#ddd" stroke-width="1"/><path d="M3.5 6 H8.5" stroke="#ddd" stroke-width="1"/><path d="M9.8 9.8 L12.8 12.8" stroke="#ddd" stroke-width="1.8"/></svg>
<div style="left:1767px;top:985px;width:115px;height:3px;background:#585858;border-radius:2px;"></div>
<div style="left:1761.5px;top:981px;width:11px;height:11px;background:#6fc7a4;border-radius:6px;"></div>
<div style="left:1764.5px;top:984px;width:5px;height:5px;background:#58a78a;border-radius:3px;"></div>
<svg style="left:1887.3px;top:980px;" width="14" height="14" viewBox="0 0 14 14"><circle cx="6" cy="6" r="5" fill="none" stroke="#ddd" stroke-width="1"/><path d="M3.5 6 H8.5 M6 3.5 V8.5" stroke="#ddd" stroke-width="1"/><path d="M9.8 9.8 L12.8 12.8" stroke="#ddd" stroke-width="1.8"/></svg>
<div style="left:494px;top:1003.5px;width:1420px;height:22px;background:#3c3c3c;"></div>
<div style="left:498px;top:1010.2px;width:2px;height:2px;background:#7a7a7a;"></div>
<div style="left:498px;top:1014.2px;width:2px;height:2px;background:#7a7a7a;"></div>
<div style="left:498px;top:1018.2px;width:2px;height:2px;background:#7a7a7a;"></div>
<div class="btn" style="left:507.3px;top:1005px;width:16.5px;height:18px;"></div>
<svg style="left:507.3px;top:1005px;" width="16.5" height="18" viewBox="0 0 16.5 18"><path d="M2.5 3 H13 V11.5 H10.5 L13 14.5 L7.5 11.5 H2.5 Z" fill="#ddd"/><path d="M4.3 5.3 H11.2 M4.3 7.3 H11.2 M4.3 9.3 H11.2" stroke="#2b2b2b" stroke-width="0.9"/><path d="M16 14.5 V17.5 H13 Z" fill="#6fc7a4"/></svg>
<div style="left:528px;top:1008.3px;width:17.8px;height:13.2px;background:#dcc261;border-radius:2px;"></div>
<span class="t" style="left:533.5px;top:1007.2px;height:16px;line-height:16px;font-size:11.5px;color:#333;">0</span>
<div style="left:554px;top:1012.4px;width:6px;height:6px;background:#dcc261;border-radius:3px;"></div>
<span class="t" style="left:565.2px;top:1007.6px;height:16px;line-height:16px;font-size:12px;color:#dcdcdc;letter-spacing:-0.293px;">You are working in an unsaved scene.</span>
<div style="left:1610px;top:1006px;width:80px;height:18px;background:#d5bf6c;border-radius:2px;"></div>
<span class="t" style="left:1616px;top:1008.2px;height:16px;line-height:16px;font-size:12.5px;color:#222;letter-spacing:-0.686px;">Feedback</span>
<svg style="left:1672px;top:1008.5px;" width="13" height="14" viewBox="0 0 13 14"><path d="M1.5 0.5 H8 L11 3.5 V13 H1.5 Z" fill="#f5f5f5" stroke="#ccc" stroke-width="0.5"/><path d="M3.5 5 H8.5 M3.5 7 H8.5 M3.5 9 H6.5" stroke="#bbb" stroke-width="0.8"/><path d="M6 11 L11.5 4.5 L13 5.8 L7.5 12.2 L5.5 12.8 Z" fill="#ef7a3a"/></svg>
<div style="left:1693px;top:1006px;width:108.8px;height:18px;background:#2ecc71;border-radius:2px;"></div>
<span class="t" style="left:1698.5px;top:1008.2px;height:16px;line-height:16px;font-size:12.5px;color:#1a1a1a;letter-spacing:-0.412px;">Upgrade to Pro</span>
<svg style="left:1782px;top:1009px;" width="14" height="13" viewBox="0 0 14 13"><path d="M1 7 C1 4 3 3 4 4 L6 6 C7 8 6.5 11 5 12 C3 12.5 1 10.5 1 7 Z M13 7 C13 4 11 3 10 4 L8 6 C7 8 7.5 11 9 12 C11 12.5 13 10.5 13 7 Z" fill="#f2c534"/><path d="M3.5 0.5 L4.3 2.3 M7 0 V2 M10.5 0.5 L9.7 2.3" stroke="#f2c534" stroke-width="0.9"/></svg>
<div style="left:1805px;top:1006px;width:106px;height:18px;background:#3fabf3;border-radius:2px;"></div>
<span class="t" style="left:1810.3px;top:1008.2px;height:16px;line-height:16px;font-size:12.5px;color:#1a1a1a;letter-spacing:-0.492px;">Tips and Tricks</span>
<svg style="left:1891.5px;top:1008.5px;" width="14" height="14" viewBox="0 0 14 14"><path d="M13.5 0.5 C9 0.5 6 3 4 7 L7 10 C11 8 13.5 5 13.5 0.5 Z" fill="#e8e8ee"/><circle cx="9.5" cy="4.5" r="1.4" fill="#5aa0e0"/><path d="M4.5 6 L1.5 6.5 L3.5 8 Z M8 9.5 L7.5 12.5 L6 10.5 Z" fill="#d94a4a"/><path d="M3.5 10.5 L1 13 L1.5 11 Z" fill="#f2a134"/><path d="M13.5 0.5 L11 1 L13 3 Z" fill="#d94a4a"/></svg>
<div style="left:0px;top:1025.5px;width:1920px;height:4.5px;background:#1e1e1e;"></div>
</body></html>
